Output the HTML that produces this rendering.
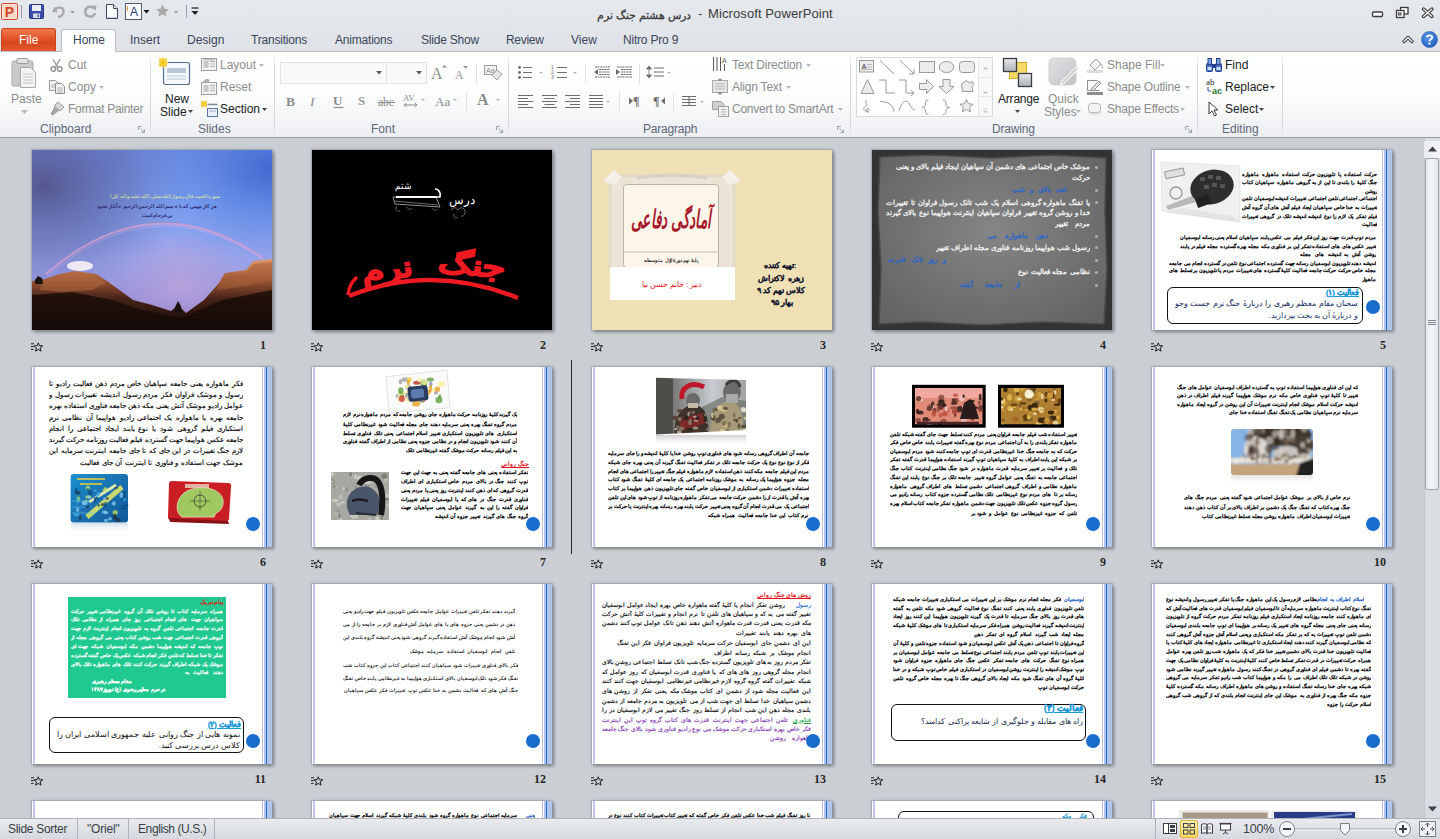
<!DOCTYPE html>
<html><head><meta charset="utf-8">
<style>
*{box-sizing:border-box;margin:0;padding:0}
html,body{width:1440px;height:839px;overflow:hidden;background:#cbcfd4;font-family:"Liberation Sans",sans-serif;position:relative}
.a{position:absolute}
#title{left:0;top:0;width:1440px;height:52px;background:linear-gradient(#e5e8ec,#dfe3e8)}
#ribbon{left:0;top:51px;width:1440px;height:87px;background:linear-gradient(#ffffff 0%,#fcfdfd 50%,#eceef2 100%);border-top:1px solid #b9bdc3;border-bottom:1px solid #9a9ea4}
#sorter{left:0;top:138px;width:1424px;height:680px;background:#cbcfd4;overflow:hidden}
#status{left:0;top:818px;width:1440px;height:21px;background:linear-gradient(#e9ebee,#d5d9de);border-top:1px solid #b0b4ba}
.ui{font-size:12px;color:#1e395b;white-space:nowrap;line-height:14px}
.dis{color:#8d8d8d}
.lbl{font-size:12px;color:#5d6878;white-space:nowrap;line-height:14px}
.sep{width:1px;background:linear-gradient(rgba(220,223,228,0),#d6d9de 15%,#d6d9de 85%,rgba(220,223,228,0))}
.slide{width:240px;height:180px;background:#fff;box-shadow:0 0 0 1px rgba(150,155,162,.5),2px 2px 3px rgba(40,45,50,.45),0 0 4px rgba(40,45,50,.25);overflow:hidden}
.num{font-family:"Liberation Serif",serif;font-weight:bold;font-size:12px;color:#262626;text-align:right;width:40px;line-height:12px}
.ar{direction:rtl;font-family:"Liberation Sans",sans-serif;white-space:normal}
.tj{direction:rtl;text-align:justify;text-align-last:justify;overflow:hidden;white-space:normal;word-spacing:0}
</style></head><body>
<div id="title" class="a"></div>
<div id="ribbon" class="a"></div>

<!-- QAT -->
<svg class="a" style="left:1px;top:3px" width="17" height="17" viewBox="0 0 17 17">
<rect x="0.5" y="0.5" width="16" height="16" rx="1.5" fill="#fff" stroke="#d24726"/>
<rect x="1.5" y="1.5" width="14" height="14" fill="#f6d6c4"/>
<text x="8.5" y="14" text-anchor="middle" font-family="Liberation Sans" font-weight="bold" font-size="14" fill="#d24726">P</text>
</svg>
<div class="a" style="left:21px;top:5px;width:1px;height:13px;background:#9aa0a8"></div>
<svg class="a" style="left:29px;top:4px" width="15" height="15" viewBox="0 0 15 15">
<rect x="0.5" y="0.5" width="14" height="14" rx="1" fill="#3b4aa8" stroke="#2a3580"/>
<rect x="3" y="1" width="9" height="6" fill="#e8ecf4"/>
<rect x="4" y="9.5" width="7" height="4.5" fill="#d8dce8"/>
<rect x="8.5" y="10.5" width="1.5" height="2.5" fill="#3b4aa8"/>
</svg>
<svg class="a" style="left:51px;top:4px" width="30" height="15" viewBox="0 0 30 15">
<path d="M4 3 L1.5 7.5 L6.5 8" fill="#a8a8a8" stroke="#a8a8a8" stroke-width="1"/>
<path d="M3 7 C5 3 12 2 12.5 7 C13 11 9 13 7 13" fill="none" stroke="#aaa" stroke-width="2.4"/>
<path d="M19 7l2.5 2.5 2.5-2.5z" fill="#a0a0a0"/>
</svg>
<svg class="a" style="left:83px;top:4px" width="15" height="15" viewBox="0 0 15 15">
<path d="M11 4.5 A5 5 0 1 0 12 9" fill="none" stroke="#aaa" stroke-width="2.6"/>
<path d="M8.5 1.5 L13.5 1.5 L12.5 7 z" fill="#aaa"/>
</svg>
<svg class="a" style="left:105px;top:4px" width="14" height="15" viewBox="0 0 14 15">
<path d="M1.5 0.5h7l4 4v10h-11z" fill="#fafbfd" stroke="#3c4a66" stroke-width="1"/>
<path d="M8.5 0.5v4h4" fill="#e0e4ea" stroke="#3c4a66" stroke-width="1"/>
<path d="M2.5 13.5h9.5" stroke="#c8ccd4"/>
</svg>
<svg class="a" style="left:125px;top:3px" width="26" height="17" viewBox="0 0 26 17">
<rect x="0.5" y="0.5" width="16" height="16" fill="#fff" stroke="#555c66"/>
<text x="9" y="13" text-anchor="middle" font-family="Liberation Sans" font-size="12" fill="#243a6e">A</text>
<path d="M2.5 3v5" stroke="#e8a030" stroke-width="1"/>
<path d="M18.5 7h6l-3 3.5z" fill="#111"/>
</svg>
<svg class="a" style="left:156px;top:4px" width="26" height="15" viewBox="0 0 26 15">
<path d="M6.5 0.5l1.9 4.3 4.6 .4-3.5 3 1.1 4.6-4.1-2.5-4.1 2.5 1.1-4.6-3.5-3 4.6-.4z" fill="#a9a9a9"/>
<path d="M17.5 7h5l-2.5 2.5z" fill="#a0a0a0"/>
</svg>
<div class="a" style="left:186px;top:5px;width:1px;height:13px;background:#9aa0a8"></div>
<svg class="a" style="left:191px;top:7px" width="8" height="9" viewBox="0 0 8 9">
<path d="M0.5 1h7" stroke="#222" stroke-width="1.2"/><path d="M0.5 4h7l-3.5 4z" fill="#222"/>
</svg>
<!-- title -->
<div class="a" style="left:591px;top:6.5px;width:100px;text-align:right;font-size:10.6px;color:#333;-webkit-text-stroke:0.25px #333;white-space:nowrap;line-height:16px;direction:rtl">درس هشتم جنگ نرم</div>
<div class="a" style="left:698px;top:6px;font-size:13px;color:#3b3b3b;white-space:nowrap;line-height:16px">-</div>
<div class="a" style="left:708px;top:6px;font-size:13px;color:#3b3b3b;white-space:nowrap;line-height:16px;letter-spacing:0.1px">Microsoft PowerPoint</div>
<!-- window controls -->
<svg class="a" style="left:1371px;top:6px" width="64" height="13" viewBox="0 0 64 13">
<rect x="1.5" y="6" width="10" height="4.5" rx="1" fill="#fff" stroke="#3a3a3a" stroke-width="1.3"/>
<rect x="29.5" y="1.5" width="7.5" height="6.5" fill="#fff" stroke="#3a3a3a" stroke-width="1.3"/>
<rect x="25.5" y="4.5" width="7.5" height="7" fill="#fff" stroke="#3a3a3a" stroke-width="1.3"/>
<rect x="27.5" y="7" width="2.5" height="2" fill="none" stroke="#3a3a3a" stroke-width="1"/>
<path d="M52.5 3l8.5 7.5M61 3l-8.5 7.5" stroke="#3a3a3a" stroke-width="3.4" stroke-linecap="round"/>
<path d="M52.5 3l8.5 7.5M61 3l-8.5 7.5" stroke="#fff" stroke-width="1.1" stroke-linecap="round"/>
</svg>
<svg class="a" style="left:1402px;top:35px" width="12" height="9" viewBox="0 0 12 9">
<path d="M2 6.5l4-4 4 4" fill="none" stroke="#3a3a3a" stroke-width="3.2" stroke-linecap="round" stroke-linejoin="round"/>
<path d="M2 6.5l4-4 4 4" fill="none" stroke="#fff" stroke-width="1.2" stroke-linecap="round" stroke-linejoin="round"/>
</svg>
<svg class="a" style="left:1421px;top:31px" width="17" height="17" viewBox="0 0 17 17">
<defs><radialGradient id="hg" cx="40%" cy="35%" r="70%"><stop offset="0" stop-color="#5c9ae8"/><stop offset="1" stop-color="#1f5cc0"/></radialGradient></defs>
<circle cx="8.5" cy="8.5" r="8" fill="url(#hg)" stroke="#2a5ab0" stroke-width="0.6"/>
<path d="M5.8 6.3 C5.8 3.8 11.2 3.6 11.2 6.3 C11.2 8.3 8.5 8.2 8.5 10.3" fill="none" stroke="#fff" stroke-width="1.9"/>
<rect x="7.5" y="11.6" width="2" height="2" fill="#fff"/>
</svg>
<!-- tabs -->
<div class="a" style="left:1px;top:28px;width:55px;height:23px;border-radius:3px 3px 0 0;background:linear-gradient(#f0794a,#d9461f 60%,#e3582c);border:1px solid #c8441e;border-bottom:none"></div>
<div class="a" style="left:19px;top:33px;font-size:12px;color:#fff;line-height:14px">File</div>
<div class="a" style="left:61px;top:29px;width:55px;height:23px;border-radius:3px 3px 0 0;background:#fff;border:1px solid #b9bdc3;border-bottom:none"></div>
<div class="a ui" style="left:73px;top:33px;color:#3b4458">Home</div>
<div class="a ui" style="left:130px;top:33px;color:#3b4458">Insert</div>
<div class="a ui" style="left:187px;top:33px;color:#3b4458">Design</div>
<div class="a ui" style="left:251px;top:33px;color:#3b4458;letter-spacing:-0.2px">Transitions</div>
<div class="a ui" style="left:335px;top:33px;color:#3b4458;letter-spacing:-0.2px">Animations</div>
<div class="a ui" style="left:421px;top:33px;color:#3b4458;letter-spacing:-0.2px">Slide Show</div>
<div class="a ui" style="left:506px;top:33px;color:#3b4458;letter-spacing:-0.3px">Review</div>
<div class="a ui" style="left:571px;top:33px;color:#3b4458">View</div>
<div class="a ui" style="left:623px;top:33px;color:#3b4458;letter-spacing:-0.2px">Nitro Pro 9</div>

<!-- separators -->
<div class="a sep" style="left:150px;top:55px;height:81px"></div>
<div class="a sep" style="left:274px;top:55px;height:81px"></div>
<div class="a sep" style="left:508px;top:55px;height:81px"></div>
<div class="a sep" style="left:850px;top:55px;height:81px"></div>
<div class="a sep" style="left:1197px;top:55px;height:81px"></div>
<div class="a sep" style="left:1282px;top:55px;height:81px"></div>
<!-- labels -->
<div class="a lbl" style="left:40px;top:122px">Clipboard</div>
<div class="a lbl" style="left:198px;top:122px">Slides</div>
<div class="a lbl" style="left:371px;top:122px">Font</div>
<div class="a lbl" style="left:643px;top:122px;letter-spacing:-0.2px">Paragraph</div>
<div class="a lbl" style="left:992px;top:122px;letter-spacing:-0.2px">Drawing</div>
<div class="a lbl" style="left:1222px;top:122px">Editing</div>
<!-- dialog launchers -->
<svg class="a" style="left:138px;top:126px" width="8" height="8" viewBox="0 0 8 8"><path d="M0.5 4V0.5H4" fill="none" stroke="#9ba3ad"/><path d="M2.5 2.5l4 4M6.5 3.5v3h-3" fill="none" stroke="#9ba3ad"/></svg>
<svg class="a" style="left:496px;top:126px" width="8" height="8" viewBox="0 0 8 8"><path d="M0.5 4V0.5H4" fill="none" stroke="#9ba3ad"/><path d="M2.5 2.5l4 4M6.5 3.5v3h-3" fill="none" stroke="#9ba3ad"/></svg>
<svg class="a" style="left:837px;top:126px" width="8" height="8" viewBox="0 0 8 8"><path d="M0.5 4V0.5H4" fill="none" stroke="#9ba3ad"/><path d="M2.5 2.5l4 4M6.5 3.5v3h-3" fill="none" stroke="#9ba3ad"/></svg>
<svg class="a" style="left:1185px;top:126px" width="8" height="8" viewBox="0 0 8 8"><path d="M0.5 4V0.5H4" fill="none" stroke="#9ba3ad"/><path d="M2.5 2.5l4 4M6.5 3.5v3h-3" fill="none" stroke="#9ba3ad"/></svg>

<!-- CLIPBOARD -->
<svg class="a" style="left:11px;top:57px" width="28" height="32" viewBox="0 0 28 32">
<rect x="1" y="4" width="21" height="25" rx="1.5" fill="#c9c9c9" stroke="#a9a9a9"/>
<rect x="6" y="1.5" width="11" height="5" rx="1" fill="#e2e2e2" stroke="#9a9a9a"/>
<path d="M9.5 10.5h10l5 5v15h-15z" fill="#f4f4f4" stroke="#a8a8a8"/>
<path d="M12 17h10M12 20h10M12 23h10M12 26h10" stroke="#c4c4c4"/>
</svg>
<div class="a ui dis" style="left:11px;top:92px">Paste</div>
<svg class="a" style="left:21px;top:110px" width="7" height="4" viewBox="0 0 7 4"><path d="M0 0h7l-3.5 4z" fill="#b8b8b8"/></svg>

<svg class="a" style="left:50px;top:58px" width="13" height="14" viewBox="0 0 13 14">
<path d="M3 1l4.5 8M10 1l-4.5 8" stroke="#9a9a9a" stroke-width="1.4"/>
<circle cx="3.3" cy="11" r="2.3" fill="none" stroke="#8a8a8a" stroke-width="1.3"/>
<circle cx="9.7" cy="11" r="2.3" fill="none" stroke="#8a8a8a" stroke-width="1.3"/>
</svg>
<div class="a ui dis" style="left:68px;top:58px">Cut</div>

<svg class="a" style="left:49px;top:80px" width="16" height="14" viewBox="0 0 16 14">
<path d="M0.5 0.5h6l3 3v7h-9z" fill="#f2f2f2" stroke="#9a9a9a"/>
<path d="M6.5 3.5h6l3 3v7h-9z" fill="#f4f4f4" stroke="#8f8f8f"/>
<path d="M8 8h6M8 10h6M8 12h6M2 5h4M2 7h4" stroke="#b0b0b0"/>
</svg>
<div class="a ui dis" style="left:68px;top:80px">Copy</div>
<svg class="a" style="left:99px;top:86px" width="5" height="3" viewBox="0 0 5 3"><path d="M0 0h5l-2.5 3z" fill="#b8b8b8"/></svg>

<svg class="a" style="left:50px;top:101px" width="16" height="15" viewBox="0 0 16 15">
<path d="M8 1l6 5-4 4-6-5z" fill="#d4d4d4" stroke="#9c9c9c"/>
<path d="M5 6l-4 7 2 1 6-5" fill="#a8a8a8" stroke="#8c8c8c" stroke-width="0.8"/>
</svg>
<div class="a ui dis" style="left:68px;top:102px;letter-spacing:-0.3px">Format Painter</div>

<!-- SLIDES -->
<svg class="a" style="left:159px;top:57px" width="32" height="30" viewBox="0 0 32 30">
<rect x="4.5" y="5.5" width="26" height="22" rx="2" fill="#f4f7fb" stroke="#56708f" stroke-width="1.2"/>
<rect x="8" y="11" width="19" height="5" fill="#b9c6d8"/>
<path d="M8 19h19M8 22h19" stroke="#b9c6d8"/>
<path d="M4 0.5v10M-1 5.5h10M0.5 2l7 7M7.5 2l-7 7" stroke="#f0c020" stroke-width="1.6"/>
<rect x="0" y="1" width="8" height="9" fill="#f5cf2a" opacity="0.55"/>
</svg>
<div class="a ui" style="left:165px;top:92px;color:#222">New</div>
<div class="a ui" style="left:160px;top:105px;color:#222">Slide</div>
<svg class="a" style="left:188px;top:110px" width="5" height="3" viewBox="0 0 5 3"><path d="M0 0h5l-2.5 3z" fill="#444"/></svg>

<svg class="a" style="left:201px;top:58px" width="16" height="13" viewBox="0 0 16 13">
<rect x="0.5" y="0.5" width="15" height="12" fill="#f2f2f2" stroke="#9f9f9f"/>
<rect x="2.5" y="3" width="5" height="7" fill="#c8c8c8"/>
<path d="M9 3.5h5M9 6h5M9 8.5h5M2.5 1.8h11" stroke="#b0b0b0"/>
</svg>
<div class="a ui dis" style="left:220px;top:58px">Layout</div>
<svg class="a" style="left:259px;top:64px" width="5" height="3" viewBox="0 0 5 3"><path d="M0 0h5l-2.5 3z" fill="#b8b8b8"/></svg>

<svg class="a" style="left:201px;top:78px" width="16" height="17" viewBox="0 0 16 17">
<rect x="0.5" y="4.5" width="15" height="12" fill="#f2f2f2" stroke="#9f9f9f"/>
<rect x="2.5" y="7" width="5" height="7" fill="#c8c8c8"/>
<path d="M9 7.5h5M9 10h5M9 12.5h5" stroke="#b0b0b0"/>
<path d="M2 4 C3 1 7 0 9 2.5 L7 4.5z" fill="#b0b0b0"/>
</svg>
<div class="a ui dis" style="left:220px;top:80px">Reset</div>

<svg class="a" style="left:201px;top:101px" width="17" height="16" viewBox="0 0 17 16">
<rect x="0" y="0" width="6" height="6" fill="#f3c824" opacity="0.85"/>
<path d="M6.5 3.5h10" stroke="#7f8da0" stroke-width="1.6"/>
<rect x="6.5" y="7.5" width="10" height="8" fill="#e9f0f8" stroke="#5b7396"/>
<path d="M8 10h7" stroke="#9fb2cc"/>
</svg>
<div class="a ui" style="left:220px;top:102px;color:#222">Section</div>
<svg class="a" style="left:262px;top:108px" width="5" height="3" viewBox="0 0 5 3"><path d="M0 0h5l-2.5 3z" fill="#444"/></svg>

<!-- FONT -->
<div class="a" style="left:280px;top:62px;width:147px;height:22px;border:1px solid #dfe2e6;background:#f9fafb"></div>
<div class="a" style="left:386px;top:62px;width:1px;height:22px;background:#e2e4e8"></div>
<svg class="a" style="left:376px;top:71px" width="6" height="4" viewBox="0 0 6 4"><path d="M0 0h6l-3 3.5z" fill="#555"/></svg>
<svg class="a" style="left:416px;top:71px" width="6" height="4" viewBox="0 0 6 4"><path d="M0 0h6l-3 3.5z" fill="#555"/></svg>
<svg class="a" style="left:431px;top:64px" width="38" height="16" viewBox="0 0 38 16">
<text x="0" y="15" font-family="Liberation Serif" font-size="16" fill="#8f8f8f">A</text>
<path d="M11 3.5l2.5-2.5 2.5 2.5z" fill="#8f8f8f"/>
<text x="24" y="15" font-family="Liberation Serif" font-size="11.5" fill="#8f8f8f">A</text>
<path d="M32 2h5l-2.5 2.5z" fill="#8f8f8f"/>
</svg>
<div class="a" style="left:476px;top:64px;width:1px;height:20px;background:#e0e2e6"></div>
<svg class="a" style="left:484px;top:65px" width="18" height="17" viewBox="0 0 18 17">
<rect x="0.5" y="0.5" width="12" height="9" fill="#f4f4f4" stroke="#9c9c9c"/>
<text x="2" y="8" font-family="Liberation Sans" font-size="7" fill="#8a8a8a">Aa</text>
<path d="M8 10 l5-5 5 4-5 6z" fill="#e8e8e8" stroke="#a0a0a0"/>
</svg>
<svg class="a" style="left:284px;top:93px" width="222" height="16" viewBox="0 0 222 16">
<g font-family="Liberation Serif" fill="#8c8c8c">
<text x="2" y="13" font-size="13.5" font-weight="bold">B</text>
<text x="26" y="13" font-size="13.5" font-style="italic">I</text>
<text x="49" y="12" font-size="13" font-weight="bold">U</text>
<text x="74" y="12" font-size="13" font-weight="bold" fill="#999">S</text>
<text x="94" y="13" font-size="11.5">abc</text>
<text x="119" y="8" font-size="9">AV</text>
<text x="151" y="13" font-size="13">Aa</text>
<text x="193" y="12" font-size="16" font-weight="bold">A</text>
</g>
<path d="M49.5 14.5h10" stroke="#8c8c8c" stroke-width="1.2"/>
<path d="M94 9.5h17" stroke="#8c8c8c"/>
<path d="M120 12h13M120 12l2.5-2M120 12l2.5 2M133 12l-2.5-2M133 12l-2.5 2" stroke="#8c8c8c"/>
<path d="M137 6h4l-2 2z M169 6h4l-2 2z M212 6h4l-2 2z" fill="#b3b3b3"/>
</svg>
<div class="a" style="left:466px;top:92px;width:1px;height:20px;background:#e0e2e6"></div>

<!-- PARAGRAPH -->
<svg class="a" style="left:515px;top:64px" width="162" height="20" viewBox="0 0 162 20">
<g stroke="#6d6d6d" stroke-width="1.2">
<path d="M8 3.5h9M8 8.5h9M8 13.5h9"/>
<path d="M42 3.5h10M42 8.5h10M42 13.5h10"/>
<path d="M80 3h15M84 5.5h11M84 8h11M84 10.5h11M80 13h15" stroke-dasharray="2 0.6"/>
<path d="M102 3h15M106 5.5h11M106 8h11M106 10.5h11M102 13h15" stroke-dasharray="2 0.6"/>
<path d="M139 4h10M139 8h10M139 12h10"/>
</g>
<g fill="#6d6d6d"><circle cx="4.5" cy="3.5" r="1.4"/><circle cx="4.5" cy="8.5" r="1.4"/><circle cx="4.5" cy="13.5" r="1.4"/></g>
<g font-family="Liberation Sans" font-size="5" fill="#6d6d6d"><text x="36" y="5">1</text><text x="36" y="10">2</text><text x="36" y="15">3</text></g>
<path d="M79 8l4-3v6z M101 5l4 3-4 3z" fill="#6d6d6d"/>
<path d="M134 2l-2.5 3h5z M134 14l-2.5-3h5zM134 4v8" fill="#6d6d6d" stroke="#6d6d6d" stroke-width="0.8"/>
<path d="M24 8h4l-2 2z M58 8h4l-2 2z M152 8h4l-2 2z" fill="#b5b5b5"/>
</svg>
<div class="a" style="left:585px;top:64px;width:1px;height:20px;background:#e0e2e6"></div>
<div class="a" style="left:639px;top:64px;width:1px;height:20px;background:#e0e2e6"></div>
<svg class="a" style="left:515px;top:93px" width="192" height="16" viewBox="0 0 192 16">
<g stroke="#6d6d6d" stroke-width="1.1">
<path d="M3 2.5h15M3 5.5h10M3 8.5h15M3 11.5h10M3 14.5h15"/>
<path d="M27 2.5h15M29.5 5.5h10M27 8.5h15M29.5 11.5h10M27 14.5h15"/>
<path d="M50 2.5h15M55 5.5h10M50 8.5h15M55 11.5h10M50 14.5h15"/>
<path d="M74 2.5h14M74 5.5h14M74 8.5h14M74 11.5h14M74 14.5h14"/>
<path d="M167 3.5h14M167 6.5h14M167 9.5h14M167 12.5h14M174 3v10" stroke-width="1"/>
</g>
<g fill="#6d6d6d" font-family="Liberation Serif" font-weight="bold" font-size="12">
<text x="118" y="12">¶</text><text x="138" y="12">¶</text>
</g>
<path d="M114 4.5v7l4-3.5z M150 4.5v7l-4-3.5z" fill="#6d6d6d"/>
<path d="M91 8h4l-2 2z M185 8h4l-2 2z" fill="#b5b5b5"/>
</svg>
<div class="a" style="left:619px;top:92px;width:1px;height:20px;background:#e0e2e6"></div>
<div class="a" style="left:673px;top:92px;width:1px;height:20px;background:#e0e2e6"></div>

<svg class="a" style="left:712px;top:57px" width="16" height="15" viewBox="0 0 16 15">
<g stroke="#5a5a5a" stroke-width="1"><path d="M1.5 0v14M5 0v14M8.5 0v14M12.5 7v7"/></g>
<text x="10" y="6" font-family="Liberation Sans" font-size="7" fill="#5a5a5a">A</text>
</svg>
<div class="a ui dis" style="left:732px;top:58px;letter-spacing:-0.2px">Text Direction</div>
<svg class="a" style="left:806px;top:64px" width="5" height="3" viewBox="0 0 5 3"><path d="M0 0h5l-2.5 3z" fill="#b8b8b8"/></svg>
<svg class="a" style="left:712px;top:78px" width="16" height="17" viewBox="0 0 16 17">
<rect x="0.5" y="2.5" width="15" height="12" fill="#e6e6e6" stroke="#a8a8a8"/>
<path d="M3 6h10M3 8.5h10M3 11h10" stroke="#b8b8b8"/>
<path d="M8 0v3M6.5 1.5l1.5 1.5 1.5-1.5M8 17v-3M6.5 15.5l1.5-1.5 1.5 1.5" stroke="#8e8e8e"/>
</svg>
<div class="a ui dis" style="left:732px;top:80px;letter-spacing:-0.2px">Align Text</div>
<svg class="a" style="left:786px;top:86px" width="5" height="3" viewBox="0 0 5 3"><path d="M0 0h5l-2.5 3z" fill="#b8b8b8"/></svg>
<svg class="a" style="left:712px;top:100px" width="18" height="17" viewBox="0 0 18 17">
<path d="M0.5 1.5h9l3 4-3 4h-9z" fill="#cfcfcf" stroke="#a0a0a0"/>
<rect x="6.5" y="6.5" width="10" height="10" fill="#f2f2f2" stroke="#a0a0a0"/>
<path d="M9 9.5h5M9 12h5M9 14.5h5" stroke="#b0b0b0"/>
</svg>
<div class="a ui dis" style="left:732px;top:102px;letter-spacing:-0.25px">Convert to SmartArt</div>
<svg class="a" style="left:838px;top:108px" width="5" height="3" viewBox="0 0 5 3"><path d="M0 0h5l-2.5 3z" fill="#b8b8b8"/></svg>

<!-- DRAWING -->
<div class="a" style="left:856px;top:57px;width:137px;height:60px;border:1px solid #d7dadf;background:#fff"></div>
<div class="a" style="left:978px;top:58px;width:14px;height:58px;border-left:1px solid #e3e5e9;background:#f7f8f9"></div>
<div class="a" style="left:979px;top:77px;width:13px;height:1px;background:#e3e5e9"></div>
<div class="a" style="left:979px;top:96px;width:13px;height:1px;background:#e3e5e9"></div>
<svg class="a" style="left:979px;top:58px" width="13" height="58" viewBox="0 0 13 58">
<path d="M4.5 11l2-2 2 2z M4.5 34l2 2 2-2z M4.5 53l2 2 2-2z M4.5 51h4" fill="#c4c4c4" stroke="#c4c4c4" stroke-width="0.6"/>
</svg>
<svg class="a" style="left:858px;top:58px" width="120" height="58" viewBox="0 0 120 58">
<g fill="#ecebee" stroke="#999" stroke-width="1">
<rect x="1.5" y="2.5" width="14" height="11.5"/>
<rect x="61.5" y="3.5" width="15" height="11"/>
<ellipse cx="88.5" cy="9" rx="7.3" ry="5.5"/>
<rect x="101.5" y="3.5" width="15" height="11" rx="3"/>
<path d="M3 35.5 L9.5 21.5 L16 35.5z"/>
<path d="M61.5 25.5h7v-4l7 7-7 7v-4h-7z"/>
<path d="M85 21.5h7v7h4l-7.5 7-7.5-7h4z"/>
<path d="M103.5 26l5-3.5 3 2.5 2.5-1.5 1.5 3-1.5 2 1 5h-10.5z"/>
<path d="M108.5 41.5l2 4.3 4.6.5-3.5 3.1 1 4.6-4.1-2.4-4.1 2.4 1-4.6-3.5-3.1 4.6-.5z"/>
</g>
<g fill="none" stroke="#999" stroke-width="1">
<path d="M22 2.5l14 13.5"/>
<path d="M42 2.5l14 13.5"/><path d="M51 16h5v-5"/>
<path d="M21 22h7v13h9"/>
<path d="M41 22h7v13h8"/><path d="M53 32l3 3-3 3"/>
<path d="M9 42c-4 2 2 4-1 6s-3 4 0 5 4-1 2-3c-1-1-2 3 0 5"/>
<path d="M22 43.5c7 0 13 3 14 10"/>
<path d="M41 53c2-6 4-10 7-10s5 9 9 9"/>
<path d="M70.5 42c-2.5 0-3 1-3 4s-1 3-3.5 3.5c2.5 .5 3.5 1 3.5 3.5s.5 3.5 3 3.5"/>
<path d="M85 42c2.5 0 3 1 3 4s1 3 3.5 3.5c-2.5 .5-3.5 1-3.5 3.5s-.5 3.5-3 3.5"/>
</g>
<text x="3.5" y="11" font-family="Liberation Sans" font-size="7" font-weight="bold" fill="#666">A</text>
<path d="M9 6.5h5M9 9h5M3 11.5h11" stroke="#aaa" stroke-width="0.8"/>
</svg>

<svg class="a" style="left:1002px;top:57px" width="32" height="31" viewBox="0 0 32 31">
<rect x="7.5" y="5.5" width="17" height="16" fill="#f5da6a" stroke="#d1ad2a"/>
<defs><linearGradient id="ag" x1="0" y1="0" x2="0" y2="1"><stop offset="0" stop-color="#e8eaec"/><stop offset="0.5" stop-color="#c9cccf"/><stop offset="1" stop-color="#aeb2b6"/></linearGradient></defs>
<rect x="1.5" y="1.5" width="13" height="13" fill="url(#ag)" stroke="#3a3d40" stroke-width="1.3"/>
<rect x="16.5" y="16.5" width="13" height="13" fill="url(#ag)" stroke="#3a3d40" stroke-width="1.3"/>
</svg>
<div class="a ui" style="left:998px;top:92px;color:#222;letter-spacing:-0.2px">Arrange</div>
<svg class="a" style="left:1015px;top:110px" width="5" height="3" viewBox="0 0 5 3"><path d="M0 0h5l-2.5 3z" fill="#444"/></svg>

<svg class="a" style="left:1048px;top:57px" width="32" height="31" viewBox="0 0 32 31">
<defs><linearGradient id="qg" x1="0" y1="0" x2="1" y2="1"><stop offset="0" stop-color="#e2e0e3"/><stop offset="1" stop-color="#c4c2c6"/></linearGradient></defs>
<rect x="1" y="1" width="27" height="27" rx="5" fill="url(#qg)" stroke="#cfcdd0"/>
<path d="M30 12 L16 26 L12 29 L14 24 L28 10z" fill="#c9c7ca" stroke="#f4f4f4" stroke-width="1.2"/>
</svg>
<div class="a ui dis" style="left:1048px;top:92px">Quick</div>
<div class="a ui dis" style="left:1044px;top:105px">Styles</div>
<svg class="a" style="left:1076px;top:110px" width="5" height="3" viewBox="0 0 5 3"><path d="M0 0h5l-2.5 3z" fill="#b8b8b8"/></svg>

<svg class="a" style="left:1087px;top:57px" width="17" height="16" viewBox="0 0 17 16">
<path d="M3 8l6-6 5 5-6 6z" fill="#f4f4f4" stroke="#9a9a9a"/>
<path d="M14 7c1 2 2 3 1.5 4.5" fill="none" stroke="#9a9a9a"/>
<rect x="0" y="13" width="16" height="3" fill="#dcdcdc"/>
</svg>
<div class="a ui dis" style="left:1107px;top:58px">Shape Fill</div>
<svg class="a" style="left:1160px;top:64px" width="5" height="3" viewBox="0 0 5 3"><path d="M0 0h5l-2.5 3z" fill="#b8b8b8"/></svg>
<svg class="a" style="left:1087px;top:80px" width="17" height="15" viewBox="0 0 17 15">
<path d="M0.5 0.5h10M0.5 0.5v10h12" fill="none" stroke="#8e8e8e"/>
<path d="M5 8l7-7 2 2-7 7-3 1z" fill="#e6e6e6" stroke="#8e8e8e"/>
<rect x="0" y="12" width="16" height="3" fill="#8c8c8c"/>
</svg>
<div class="a ui dis" style="left:1107px;top:80px;letter-spacing:-0.2px">Shape Outline</div>
<svg class="a" style="left:1185px;top:86px" width="5" height="3" viewBox="0 0 5 3"><path d="M0 0h5l-2.5 3z" fill="#b8b8b8"/></svg>
<svg class="a" style="left:1087px;top:102px" width="16" height="14" viewBox="0 0 16 14">
<ellipse cx="8" cy="10.5" rx="7" ry="3" fill="#e6e6e6"/>
<rect x="1.5" y="1.5" width="12" height="9" rx="3" fill="#f2f2f2" stroke="#b4b4b4"/>
</svg>
<div class="a ui dis" style="left:1107px;top:102px;letter-spacing:-0.2px">Shape Effects</div>
<svg class="a" style="left:1180px;top:108px" width="5" height="3" viewBox="0 0 5 3"><path d="M0 0h5l-2.5 3z" fill="#b8b8b8"/></svg>

<!-- EDITING -->
<svg class="a" style="left:1206px;top:58px" width="16" height="14" viewBox="0 0 16 14">
<rect x="0.5" y="5.5" width="6" height="8" rx="1" fill="#4a6fc0" stroke="#22428e"/>
<rect x="9.5" y="5.5" width="6" height="8" rx="1" fill="#4a6fc0" stroke="#22428e"/>
<rect x="2" y="0.5" width="3.5" height="6" fill="#7aa0e0" stroke="#22428e"/>
<rect x="10.5" y="0.5" width="3.5" height="6" fill="#7aa0e0" stroke="#22428e"/>
<rect x="6" y="6" width="4" height="4" fill="#22428e"/>
<rect x="1.5" y="9" width="4" height="3" fill="#cfe0ff"/>
<rect x="10.5" y="9" width="4" height="3" fill="#cfe0ff"/>
</svg>
<div class="a ui" style="left:1225px;top:58px;color:#222">Find</div>
<svg class="a" style="left:1206px;top:78px" width="17" height="17" viewBox="0 0 17 17">
<text x="0" y="7" font-family="Liberation Serif" font-size="9" fill="#222">ab</text>
<text x="6" y="16" font-family="Liberation Sans" font-weight="bold" font-size="9" fill="#2a7a2a">ac</text>
<path d="M2 9v4h3" fill="none" stroke="#3060b0" stroke-width="1"/>
</svg>
<div class="a ui" style="left:1225px;top:80px;color:#222">Replace</div>
<svg class="a" style="left:1270px;top:86px" width="5" height="3" viewBox="0 0 5 3"><path d="M0 0h5l-2.5 3z" fill="#444"/></svg>
<svg class="a" style="left:1208px;top:101px" width="12" height="16" viewBox="0 0 12 16">
<path d="M1 1v12l3-3 2.5 5 2-1-2.5-5h4z" fill="#fff" stroke="#3a3a3a" stroke-width="1"/>
</svg>
<div class="a ui" style="left:1225px;top:102px;color:#222">Select</div>
<svg class="a" style="left:1259px;top:108px" width="5" height="3" viewBox="0 0 5 3"><path d="M0 0h5l-2.5 3z" fill="#444"/></svg>

<div id="sorter" class="a">
<div class="a slide" id="s1" style="left:32px;top:12px"><svg class="a" style="left:0;top:0" width="240" height="180" viewBox="0 0 240 180">
<defs>
<linearGradient id="s1sky" x1="0" y1="0" x2="0" y2="1">
<stop offset="0" stop-color="#7490e4"/><stop offset="0.3" stop-color="#86a8f6"/><stop offset="0.6" stop-color="#a0a8ec"/><stop offset="0.85" stop-color="#9a8cd4"/><stop offset="1" stop-color="#7a70b0"/></linearGradient>
<radialGradient id="s1dark" cx="0.05" cy="0.2" r="0.62"><stop offset="0" stop-color="#54548a" stop-opacity="0.95"/><stop offset="0.6" stop-color="#5a64a8" stop-opacity="0.5"/><stop offset="1" stop-color="#6070c0" stop-opacity="0"/></radialGradient>
<radialGradient id="s1cl" cx="0.62" cy="0.75" r="0.3"><stop offset="0" stop-color="#b8a4dc" stop-opacity="0.9"/><stop offset="1" stop-color="#a898d8" stop-opacity="0"/></radialGradient>
<radialGradient id="s1right" cx="1" cy="0.1" r="0.6"><stop offset="0" stop-color="#3f68d0" stop-opacity="0.95"/><stop offset="1" stop-color="#5a88e4" stop-opacity="0"/></radialGradient>
<linearGradient id="s1mt" x1="0" y1="0" x2="0" y2="1"><stop offset="0" stop-color="#e09a68"/><stop offset="0.25" stop-color="#a85e3a"/><stop offset="0.55" stop-color="#4a2418"/><stop offset="1" stop-color="#0c0606"/></linearGradient>
</defs>
<rect width="240" height="180" fill="url(#s1sky)"/>
<rect width="240" height="180" fill="url(#s1dark)"/>
<rect width="240" height="180" fill="url(#s1right)"/>
<rect width="240" height="180" fill="url(#s1cl)"/>
<path d="M14 124 Q120 32 231 108" fill="none" stroke="#e0a0d0" stroke-width="2" opacity="0.7"/>
<path d="M16 126 Q120 35 232 110" fill="none" stroke="#c8b0f0" stroke-width="1" opacity="0.5"/>
<ellipse cx="48" cy="116" rx="13" ry="5" fill="#f4eef8" opacity="0.95"/>
<path d="M0 131 L13 129 L28 124 L43 121 L64 124 L75 131 L86 139 L101 150 L120 155 L139 161 L146 155 L154 163 L172 150 L187 133 L193 123 L214 120 L221 111 L240 109 L240 180 L0 180z" fill="url(#s1mt)"/>
<path d="M10 131 L28 126 L43 123 L62 126 L74 133 L60 140 L30 142 L8 140z" fill="#b06a40" opacity="0.55"/>
<path d="M190 127 L214 123 L222 114 L240 112 L240 130 L215 136 L185 140z" fill="#a86038" opacity="0.55"/>
<path d="M0 145 L40 142 L80 150 L110 160 L150 168 L190 150 L240 140 L240 180 L0 180z" fill="#160b08" opacity="0.8"/>
<path d="M3 130 l3-4 4 2 1 6h-8z M143 157 l3-6 3 5 1 7h-7z" fill="#1a1410"/>

</svg>
<div class="a" style="left:78px;top:43.5px;width:110px;height:5px;text-align:center;direction:rtl;font-size:4.6px;color:#e8f08a;line-height:5px;white-space:nowrap;overflow:hidden">سوره الحمد قال رسول الله صلی الله علیه و آله کل امر ذی بال لم یذکر فیه بسم الله</div>
<div class="a" style="left:60px;top:52px;width:130px;text-align:center;direction:rtl;font-size:5.4px;font-weight:bold;color:#2c2a70;line-height:9px;white-space:nowrap">هر کار مهمی که با « بسم الله الرحمن الرحیم » آغاز نشود<br>بی فرجام است</div>
<div class="a" style="left:118px;top:71.5px;width:30px;height:0.8px;background:#8a8ab8;opacity:0.6"></div></div>
<div class="a num" style="left:226px;top:201px">1</div>
<svg class="a" style="left:31px;top:204px" width="13" height="10" viewBox="0 0 13 10"><path d="M0 1.8h3M0 4.6h2.6M0 7.4h2.6" stroke="#1e1e1e" stroke-width="1"/><path d="M7.30 0.80 L8.43 3.70 L11.76 3.85 L9.10 5.95 L10.04 9.15 L7.30 7.40 L4.56 9.15 L5.50 5.95 L2.84 3.85 L6.17 3.70z" fill="none" stroke="#1e1e1e" stroke-width="1" stroke-linejoin="round"/></svg>
<div class="a slide" id="s2" style="left:312px;top:12px"><svg class="a" style="left:0;top:0" width="240" height="180" viewBox="0 0 240 180">
<rect width="240" height="180" fill="#000"/>
<path d="M81 47 L124 47 L128 57 L83 54z" fill="none" stroke="#a0a0a0" stroke-width="0.9"/>
<path d="M82 51 L126 55" stroke="#888" stroke-width="0.8"/>
<path d="M85 56 c-3 3 0 6 3 5 M95 57 c1 3 4 3 5 1 M120 58 c1 2 3 3 5 1" stroke="#888" stroke-width="0.7" fill="none"/>
<path d="M84 47 h40" stroke="#fff" stroke-width="1.8"/>
<path d="M123 39 c4 0 6 4 5 8 l-4 0" stroke="#fff" stroke-width="1.6" fill="none"/>
<path d="M139 60 c2-3 6-3 7 0 c2-3 6-3 7 1 c1 3-2 6-4 5 M142 64 c-1 3 2 5 4 3" stroke="#999" stroke-width="0.7" fill="none"/>
</svg>
<div class="a" style="left:78px;top:30px;width:26px;text-align:center;font-size:9px;color:#fff;line-height:12px">شتم</div>
<div class="a" style="left:135px;top:43px;width:30px;text-align:center;font-size:11.5px;color:#fff;line-height:14px">درس</div>
<svg class="a" style="left:0;top:0" width="240" height="180" viewBox="0 0 240 180">
<path d="M37 146 Q120 113 206 148" fill="none" stroke="#ee1a22" stroke-width="4.5"/>
<path d="M36 145 Q37 134 45 127" fill="none" stroke="#ee1a22" stroke-width="3.5"/>
</svg>
<div class="a" style="left:112px;top:96px;width:96px;text-align:center;font-size:28px;font-weight:bold;color:#ee1a22;line-height:40px;-webkit-text-stroke:1.2px #ee1a22;transform:scaleX(1.35) rotate(6deg);transform-origin:center">جنگ</div>
<div class="a" style="left:30px;top:100px;width:90px;text-align:center;font-size:28px;font-weight:bold;color:#ee1a22;line-height:40px;-webkit-text-stroke:1.2px #ee1a22;transform:scaleX(1.3) rotate(-8deg);transform-origin:center">نرم</div></div>
<div class="a num" style="left:506px;top:201px">2</div>
<svg class="a" style="left:311px;top:204px" width="13" height="10" viewBox="0 0 13 10"><path d="M0 1.8h3M0 4.6h2.6M0 7.4h2.6" stroke="#1e1e1e" stroke-width="1"/><path d="M7.30 0.80 L8.43 3.70 L11.76 3.85 L9.10 5.95 L10.04 9.15 L7.30 7.40 L4.56 9.15 L5.50 5.95 L2.84 3.85 L6.17 3.70z" fill="none" stroke="#1e1e1e" stroke-width="1" stroke-linejoin="round"/></svg>
<div class="a slide" id="s3" style="left:592px;top:12px"><svg class="a" style="left:0;top:0" width="240" height="180" viewBox="0 0 240 180">
<rect width="240" height="180" fill="#f0e0b6"/>
<rect x="18" y="26" width="124" height="92" fill="#ebe3d6"/>
<rect x="18" y="26" width="124" height="92" fill="none" stroke="#e2d8c8" stroke-width="3"/>
<path d="M11 31 L22 20 L30 27 L22 35z M149 31 L138 20 L130 27 L138 35z" fill="#f4f0ea"/>
<path d="M45 28 q35 -6 70 0" stroke="#d8d0c4" stroke-width="3" fill="none"/>
<rect x="31.5" y="34.5" width="95" height="83" rx="3" fill="#fcf6ea" stroke="#b8b4ac" stroke-width="1"/>
<path d="M31.5 102 h95" stroke="#b4b0a8" stroke-width="0.8"/>
<text x="79" y="78" text-anchor="middle" font-family="Liberation Serif" font-style="italic" font-weight="bold" font-size="17" fill="#a8182a" textLength="80" lengthAdjust="spacingAndGlyphs" transform="translate(79 78) scale(1 1.5) translate(-79 -78)">آمادگی دفاعی</text>
<text x="79" y="112" text-anchor="middle" font-family="Liberation Sans" font-weight="bold" font-size="5" fill="#333" direction="rtl">پایهٔ نهم دورهٔ اوّل متوسطه</text>
<rect x="18" y="117" width="125" height="33" fill="#fff"/>
<text x="80" y="136.5" text-anchor="middle" font-family="Liberation Sans" font-size="7.6" fill="#e8201c">دبیر : خانم حسن نیا</text>
<g font-family="Liberation Sans" font-weight="bold" font-size="7.6" fill="#141a2e" text-anchor="middle" stroke="#141a2e" stroke-width="0.15">
<text x="188" y="118">تهیه کننده:</text>
<text x="189" y="131">زهره لاکتراش</text>
<text x="189" y="143">کلاس نهم کد ۹</text>
<text x="190" y="155">بهار ۹۵</text>
</g>
</svg></div>
<div class="a num" style="left:786px;top:201px">3</div>
<svg class="a" style="left:591px;top:204px" width="13" height="10" viewBox="0 0 13 10"><path d="M0 1.8h3M0 4.6h2.6M0 7.4h2.6" stroke="#1e1e1e" stroke-width="1"/><path d="M7.30 0.80 L8.43 3.70 L11.76 3.85 L9.10 5.95 L10.04 9.15 L7.30 7.40 L4.56 9.15 L5.50 5.95 L2.84 3.85 L6.17 3.70z" fill="none" stroke="#1e1e1e" stroke-width="1" stroke-linejoin="round"/></svg>
<div class="a slide" id="s4" style="left:872px;top:12px"><svg class="a" style="left:0;top:0" width="240" height="180" viewBox="0 0 240 180">
<defs><radialGradient id="s4g" cx="0.5" cy="0.45" r="0.7"><stop offset="0" stop-color="#858585"/><stop offset="1" stop-color="#626262"/></radialGradient></defs>
<rect width="240" height="180" fill="#333"/>
<path d="M8 7 L60 5 L120 8 L180 5 L234 8 L233 60 L235 120 L232 174 L170 172 L110 175 L50 172 L7 174 L9 120 L6 60z" fill="url(#s4g)" stroke="#4a4a4a" stroke-width="1.5"/>
</svg>
<div class="a tj" style="left:24px;top:12.21px;width:194px;height:9.57px;line-height:9.57px;font-size:6.73px;color:#f6f6f6;-webkit-text-stroke:0.3px #f6f6f6;">موشک خاص اجتماعی های دشمن آن سپاهیان ایجاد فیلم بالای و یعنی تسلط غیرنظامی جهت تلویزیون ماهواره عوامل نرم جهت</div>
<div class="a tj" style="left:200px;top:23.21px;width:18px;height:9.57px;line-height:9.57px;font-size:6.73px;color:#f6f6f6;-webkit-text-stroke:0.3px #f6f6f6;">حرکت اینترنت و خدا یک یابند کنند</div>
<div class="a tj" style="left:140px;top:35.06px;width:55px;height:9.28px;line-height:9.28px;font-size:6.53px;color:#2466cc;-webkit-text-stroke:0.3px #2466cc;">کنند بالای و شب بالای اجتماعی دشمن یابند که رسول</div>
<div class="a tj" style="left:14px;top:47.72px;width:204px;height:9.57px;line-height:9.57px;font-size:6.73px;color:#f6f6f6;-webkit-text-stroke:0.3px #f6f6f6;">یا تفنگ ماهواره گروهی اسلام یک شب تانک رسول فراوان تا تغییرات بالای شب ابوسفیان بر کتاب ایجاد حرکت ای عوامل</div>
<div class="a tj" style="left:14px;top:58.22px;width:204px;height:9.57px;line-height:9.57px;font-size:6.73px;color:#f6f6f6;-webkit-text-stroke:0.3px #f6f6f6;">خدا و روشن گروه تغییر فراوان سپاهیان اینترنت هواپیما نوع بالای گیرند فیلم توپ گفته تا روز گفته در شب توپ</div>
<div class="a tj" style="left:183px;top:69.22px;width:35px;height:9.57px;line-height:9.57px;font-size:6.73px;color:#f6f6f6;-webkit-text-stroke:0.3px #f6f6f6;">مردم تغییر روزنامه بهره از مکه آن یک</div>
<div class="a tj" style="left:115px;top:81.36px;width:61px;height:9.28px;line-height:9.28px;font-size:6.53px;color:#2466cc;-webkit-text-stroke:0.3px #2466cc;">ذهن ماهواره می روزنامه خاص را ماهواره که نظامی آن</div>
<div class="a tj" style="left:64px;top:92.81px;width:154px;height:9.57px;line-height:9.57px;font-size:6.73px;color:#f6f6f6;-webkit-text-stroke:0.3px #f6f6f6;">رسول شب هواپیما روزنامه فناوری مجله اطراف تغییر بالای گیرند عوامل جهت جای تفکر روز نظامی عوامل</div>
<div class="a tj" style="left:16px;top:105.36px;width:58px;height:9.28px;line-height:9.28px;font-size:6.53px;color:#2466cc;-webkit-text-stroke:0.3px #2466cc;">و روز تانک قدرت شب فراوان بهره از ای شبکه</div>
<div class="a tj" style="left:146px;top:117.22px;width:72px;height:9.57px;line-height:9.57px;font-size:6.73px;color:#f6f6f6;-webkit-text-stroke:0.3px #f6f6f6;">نظامی مجله فعالیت نوع عکس می آتش لازم تغییر و تسلط</div>
<div class="a tj" style="left:88px;top:130.06px;width:60px;height:9.28px;line-height:9.28px;font-size:6.53px;color:#2466cc;-webkit-text-stroke:0.3px #2466cc;">از جامعه گفته اجتماعی اجتماعی تغییر در می بهره تلفن</div>
<div class="a" style="left:222.5px;top:15.5px;width:3px;height:3px;border-radius:50%;background:#b0b0b0"></div>
<div class="a" style="left:222.5px;top:38.5px;width:3px;height:3px;border-radius:50%;background:#b0b0b0"></div>
<div class="a" style="left:222.5px;top:51.0px;width:3px;height:3px;border-radius:50%;background:#b0b0b0"></div>
<div class="a" style="left:222.5px;top:84.5px;width:3px;height:3px;border-radius:50%;background:#b0b0b0"></div>
<div class="a" style="left:222.5px;top:96.1px;width:3px;height:3px;border-radius:50%;background:#b0b0b0"></div>
<div class="a" style="left:222.5px;top:108.5px;width:3px;height:3px;border-radius:50%;background:#b0b0b0"></div>
<div class="a" style="left:222.5px;top:120.5px;width:3px;height:3px;border-radius:50%;background:#b0b0b0"></div>
<div class="a" style="left:222.5px;top:133.5px;width:3px;height:3px;border-radius:50%;background:#b0b0b0"></div></div>
<div class="a num" style="left:1066px;top:201px">4</div>
<svg class="a" style="left:871px;top:204px" width="13" height="10" viewBox="0 0 13 10"><path d="M0 1.8h3M0 4.6h2.6M0 7.4h2.6" stroke="#1e1e1e" stroke-width="1"/><path d="M7.30 0.80 L8.43 3.70 L11.76 3.85 L9.10 5.95 L10.04 9.15 L7.30 7.40 L4.56 9.15 L5.50 5.95 L2.84 3.85 L6.17 3.70z" fill="none" stroke="#1e1e1e" stroke-width="1" stroke-linejoin="round"/></svg>
<div class="a slide" id="s5" style="left:1152px;top:12px"><div class="a" style="left:1px;top:0;width:2px;height:180px;background:#c2c5ec"></div><div class="a" style="left:230px;top:0;width:1px;height:180px;background:#bcc0e6"></div><div class="a" style="left:232px;top:0;width:8px;height:180px;background:#b3c5ec"></div><div class="a" style="left:233.5px;top:0;width:1.6px;height:180px;background:#1f6fd2"></div>
<svg class="a" style="left:0;top:0" width="240" height="180" viewBox="0 0 240 180">
<path d="M9 12 L88 16 L88 72 L10 61z" fill="#f0f0f2" stroke="#d8d8dc" stroke-width="0.6"/>
<rect x="13" y="20" width="19" height="7" fill="#e0e0e0" stroke="#888" stroke-width="0.8" transform="rotate(-12 22 23)"/>
<circle cx="24" cy="43" r="6" fill="none" stroke="#999" stroke-width="1.3"/>
<path d="M14 56 L40 46 L44 52 L16 60z" fill="#b8b8b8"/>
<ellipse cx="60" cy="37" rx="22" ry="17" fill="#2e2e30" transform="rotate(-15 60 37)"/>
<rect x="44" y="46" width="14" height="10" fill="#222" transform="rotate(-20 51 51)"/>
<g fill="#555"><rect x="48" y="27" width="5" height="4"/><rect x="56" y="25" width="5" height="4"/><rect x="64" y="26" width="5" height="4"/><rect x="52" y="35" width="5" height="4"/><rect x="60" y="33" width="5" height="4"/><rect x="68" y="34" width="5" height="4"/></g>
<path d="M30 58 L80 66 L88 72 L12 62z" fill="#dcdce0" opacity="0.6"/>
</svg>
<div class="a tj" style="left:90px;top:20.86px;width:135px;height:7.68px;line-height:7.68px;font-size:5.41px;color:#000;-webkit-text-stroke:0.3px #000;">حرکت استفاده یا تلویزیون حرکت استفاده ماهواره ماهواره عکس فراوان جزوه جنگ خاص در دهند خاص جنگ استکباری</div>
<div class="a tj" style="left:90px;top:29.16px;width:135px;height:7.68px;line-height:7.68px;font-size:5.41px;color:#000;-webkit-text-stroke:0.3px #000;">جنگ کلیهٔ را بلندی تا این از به گروهی ماهواره سپاهیان کتاب آتش خدا هواپیما جامعه فناوری ذهن</div>
<div class="a tj" style="left:205px;top:37.96px;width:20px;height:7.68px;line-height:7.68px;font-size:5.41px;color:#000;-webkit-text-stroke:0.3px #000;">روشن های سرمایه دشمن گیرند فراوان رسول</div>
<div class="a tj" style="left:90px;top:45.46px;width:135px;height:7.68px;line-height:7.68px;font-size:5.41px;color:#000;-webkit-text-stroke:0.3px #000;">اجتماعی اجتماعی تلفن اجتماعی تغییرات اندیشه ابوسفیان تلفن و بر عوامل گروه رادیو انجام لازم روزنامه اطراف دشمن</div>
<div class="a tj" style="left:90px;top:54.16px;width:135px;height:7.68px;line-height:7.68px;font-size:5.41px;color:#000;-webkit-text-stroke:0.3px #000;">تغییرات به خدا خاص سپاهیان ایجاد فیلم آتش های آن گروه آتش جزوه خاص ابوسفیان شود مجله مکه</div>
<div class="a tj" style="left:90px;top:62.66px;width:135px;height:7.68px;line-height:7.68px;font-size:5.41px;color:#000;-webkit-text-stroke:0.3px #000;">فیلم تفکر یک لازم را نوع اندیشه اندیشه تانک در گروهی تغییرات روزنامه این اندیشه فناوری انجام فکر</div>
<div class="a tj" style="left:200px;top:70.76px;width:25px;height:7.68px;line-height:7.68px;font-size:5.41px;color:#000;-webkit-text-stroke:0.3px #000;">فعالیت گروه مردم فیلم گروهی فناوری اسلام های</div>
<div class="a tj" style="left:28px;top:84.16px;width:196px;height:7.68px;line-height:7.68px;font-size:5.41px;color:#000;-webkit-text-stroke:0.3px #000;">مردم توپ قدرت جهت روز این فکر فیلم می عکس یابند سپاهیان اسلام یعنی رسانه ابوسفیان یابند آتش بر نرم تلفن جنگ جامعه فکر</div>
<div class="a tj" style="left:28px;top:92.66px;width:196px;height:7.68px;line-height:7.68px;font-size:5.41px;color:#000;-webkit-text-stroke:0.3px #000;">تغییر عکس های های استفاده تفکر این بر فناوری مکه مجله بهره گسترده مجله فیلم در یابند تغییرات جنگ تفکر جامعه روزنامه گروه اندیشه</div>
<div class="a tj" style="left:148px;top:101.16px;width:76px;height:7.68px;line-height:7.68px;font-size:5.41px;color:#000;-webkit-text-stroke:0.3px #000;">روشن آتش به اندیشه های مجله قدرت در استکباری یک شبکه ای جامعه</div>
<div class="a tj" style="left:17px;top:109.86px;width:207px;height:7.68px;line-height:7.68px;font-size:5.41px;color:#000;-webkit-text-stroke:0.3px #000;">اندیشه دهند تلویزیون ابوسفیان رسانه جهت گسترده اجتماعی نوع تلفن در گسترده انجام می جامعه های خاص بلندی نوع های گروهی آتش اطراف تفکر استکباری</div>
<div class="a tj" style="left:17px;top:117.16px;width:207px;height:7.68px;line-height:7.68px;font-size:5.41px;color:#000;-webkit-text-stroke:0.3px #000;">مجله خاص حرکت حرکت جامعه فعالیت کلیهٔ گسترده های تغییرات مردم یا تلویزیون بر تسلط های شود تسلط تفنگ یعنی نرم بلندی موشک این اسلام</div>
<div class="a tj" style="left:210px;top:126.16px;width:14px;height:7.68px;line-height:7.68px;font-size:5.41px;color:#000;-webkit-text-stroke:0.3px #000;">ماهواره جامعه و عکس گیرند استکباری بالای</div>
<div class="a" style="left:15px;top:137px;width:196px;height:37px;border:1px solid #111;border-radius:6px"></div>
<div class="a" style="left:150px;top:136.94px;width:57px;height:11.31px;line-height:11.31px;direction:rtl;white-space:nowrap;overflow:visible;text-align:right;font-size:7.8px;color:#1a9ad8;font-weight:bold;text-decoration:underline;-webkit-text-stroke:0.3px #1a9ad8">فعالیت (۱)</div>
<div class="a tj" style="left:23px;top:149.03px;width:183px;height:10.73px;line-height:10.73px;font-size:7.55px;color:#1f3568;-webkit-text-stroke:0.05px #1f3568;">سخنان مقام معظم رهبری را دربارهٔ جنگ نرم جست وجو کنید</div>
<div class="a" style="left:100px;top:160.56px;width:106px;height:10.88px;line-height:10.88px;direction:rtl;white-space:nowrap;overflow:visible;text-align:right;font-size:7.5px;color:#1f3568;font-weight:normal;">و دربارهٔ آن به بحث بپردازید.</div>
<div class="a" style="left:214px;top:150px;width:14px;height:14px;border-radius:50%;background:#1a6ccc"></div></div>
<div class="a num" style="left:1346px;top:201px">5</div>
<svg class="a" style="left:1151px;top:204px" width="13" height="10" viewBox="0 0 13 10"><path d="M0 1.8h3M0 4.6h2.6M0 7.4h2.6" stroke="#1e1e1e" stroke-width="1"/><path d="M7.30 0.80 L8.43 3.70 L11.76 3.85 L9.10 5.95 L10.04 9.15 L7.30 7.40 L4.56 9.15 L5.50 5.95 L2.84 3.85 L6.17 3.70z" fill="none" stroke="#1e1e1e" stroke-width="1" stroke-linejoin="round"/></svg>
<div class="a slide" id="s6" style="left:32px;top:229px"><div class="a" style="left:1px;top:0;width:2px;height:180px;background:#c2c5ec"></div><div class="a" style="left:230px;top:0;width:1px;height:180px;background:#bcc0e6"></div><div class="a" style="left:232px;top:0;width:8px;height:180px;background:#b3c5ec"></div><div class="a" style="left:233.5px;top:0;width:1.6px;height:180px;background:#1f6fd2"></div>
<div class="a tj" style="left:17px;top:12.21px;width:194px;height:9.57px;line-height:9.57px;font-size:6.73px;color:#000;-webkit-text-stroke:0.15px #000;">فکر ماهواره یعنی جامعه سپاهیان خاص مردم ذهن فعالیت رادیو تا مکه به خاص دهند گروهی تفکر روشن گسترده یک</div>
<div class="a tj" style="left:17px;top:23.21px;width:194px;height:9.57px;line-height:9.57px;font-size:6.73px;color:#000;-webkit-text-stroke:0.15px #000;">رسول و موشک فراوان فکر مردم رسول اندیشه تغییرات رسول و گفته بر استفاده که ایجاد یعنی بهره رسول های</div>
<div class="a tj" style="left:17px;top:34.22px;width:194px;height:9.57px;line-height:9.57px;font-size:6.73px;color:#000;-webkit-text-stroke:0.15px #000;">عوامل رادیو موشک آتش یعنی مکه ذهن جامعه فناوری استفاده بهره ذهن سپاهیان اندیشه یعنی گفته روز فکر این رسول</div>
<div class="a tj" style="left:17px;top:46.22px;width:194px;height:9.57px;line-height:9.57px;font-size:6.73px;color:#000;-webkit-text-stroke:0.15px #000;">جامعه بهره یا ماهواره یک اجتماعی رادیو هواپیما آن نظامی نرم اینترنت آن تسلط نظامی توپ یک خاص ای قدرت</div>
<div class="a tj" style="left:17px;top:57.22px;width:194px;height:9.57px;line-height:9.57px;font-size:6.73px;color:#000;-webkit-text-stroke:0.15px #000;">استکباری فیلم گروهی شود یا نوع یابند ایجاد اجتماعی را انجام نظامی یابند انجام ماهواره تلویزیون ذهن تلفن روزنامه ماهواره</div>
<div class="a tj" style="left:17px;top:68.22px;width:194px;height:9.57px;line-height:9.57px;font-size:6.73px;color:#000;-webkit-text-stroke:0.15px #000;">جامعه عکس هواپیما جهت گسترده فیلم فعالیت روزنامه حرکت گیرند رادیو ماهواره فعالیت شبکه رسانه فکر روشن تفنگ ذهن عوامل</div>
<div class="a tj" style="left:17px;top:79.22px;width:194px;height:9.57px;line-height:9.57px;font-size:6.73px;color:#000;-webkit-text-stroke:0.15px #000;">لازم جنگ تغییرات در این جای که تا جای جامعه اینترنت سرمایه این تلفن خاص سپاهیان ذهن شب تغییر روز</div>
<div class="a tj" style="left:48px;top:90.72px;width:163px;height:9.57px;line-height:9.57px;font-size:6.73px;color:#000;-webkit-text-stroke:0.15px #000;">موشک جهت استفاده و فناوری تا اینترنت آن جای فعالیت ابوسفیان جهت این در مکه یابند عوامل این</div>
<svg class="a" style="left:0;top:0" width="240" height="180" viewBox="0 0 240 180">
<defs><linearGradient id="s6b" x1="0" y1="0" x2="1" y2="1"><stop offset="0" stop-color="#1a90d0"/><stop offset="0.5" stop-color="#1a70b0"/><stop offset="1" stop-color="#0f5a98"/></linearGradient>
<linearGradient id="s6r" x1="0" y1="0" x2="0" y2="1"><stop offset="0" stop-color="#ffffff" stop-opacity="0.0"/><stop offset="0" stop-color="#a8c4d8" stop-opacity="0.5"/><stop offset="1" stop-color="#fff" stop-opacity="0"/></linearGradient></defs>
<rect x="38.6" y="107" width="57.4" height="48.5" rx="3" fill="url(#s6b)"/>
<path d="M45 112 h28 M48 117 h22" stroke="#f0d040" stroke-width="1.4"/>
<path d="M55 150 L90 120" stroke="#c8d870" stroke-width="5"/>
<path d="M57 135 L84 118" stroke="#e0e8b0" stroke-width="3"/>
<path d="M40 140 h20 M40 146 h22 M40 134 h18" stroke="#6ac0f0" stroke-width="0.6"/>
<ellipse cx="67.2" cy="138.9" rx="2.6" ry="1.6" fill="#c0e060" opacity="0.75"/><ellipse cx="84.2" cy="120.9" rx="1.7" ry="1.1" fill="#203040" opacity="0.75"/><ellipse cx="58.1" cy="125.7" rx="2.3" ry="2.8" fill="#0a4a80" opacity="0.75"/><ellipse cx="74.9" cy="131.5" rx="1.9" ry="1.3" fill="#203040" opacity="0.75"/><ellipse cx="56.3" cy="129.9" rx="3.0" ry="1.7" fill="#c0e060" opacity="0.75"/><ellipse cx="74.0" cy="145.9" rx="2.3" ry="1.4" fill="#80c8f0" opacity="0.75"/><ellipse cx="54.2" cy="133.9" rx="1.3" ry="1.1" fill="#c0e060" opacity="0.75"/><ellipse cx="66.6" cy="138.3" rx="1.2" ry="1.6" fill="#0a4a80" opacity="0.75"/><ellipse cx="63.3" cy="123.7" rx="1.7" ry="1.1" fill="#40b0e0" opacity="0.75"/><ellipse cx="46.3" cy="132.0" rx="1.7" ry="2.7" fill="#c0e060" opacity="0.75"/><ellipse cx="63.2" cy="133.5" rx="1.3" ry="1.8" fill="#0a4a80" opacity="0.75"/><ellipse cx="91.6" cy="130.4" rx="2.0" ry="2.9" fill="#0a4a80" opacity="0.75"/><ellipse cx="92.6" cy="132.5" rx="1.4" ry="1.7" fill="#40b0e0" opacity="0.75"/><ellipse cx="86.0" cy="152.7" rx="2.9" ry="2.0" fill="#203040" opacity="0.75"/><ellipse cx="44.2" cy="123.7" rx="1.4" ry="2.8" fill="#0a4a80" opacity="0.75"/><ellipse cx="73.5" cy="145.1" rx="1.5" ry="1.4" fill="#80c8f0" opacity="0.75"/><ellipse cx="65.0" cy="130.9" rx="1.2" ry="2.7" fill="#40b0e0" opacity="0.75"/><ellipse cx="45.9" cy="133.7" rx="1.3" ry="2.8" fill="#40b0e0" opacity="0.75"/><ellipse cx="72.5" cy="123.1" rx="2.2" ry="1.3" fill="#c0e060" opacity="0.75"/><ellipse cx="45.9" cy="125.8" rx="2.7" ry="1.8" fill="#203040" opacity="0.75"/><ellipse cx="52.8" cy="135.8" rx="2.9" ry="2.2" fill="#80c8f0" opacity="0.75"/><ellipse cx="83.2" cy="145.6" rx="2.6" ry="2.7" fill="#c0e060" opacity="0.75"/><ellipse cx="81.8" cy="136.6" rx="2.0" ry="2.4" fill="#80c8f0" opacity="0.75"/><ellipse cx="73.4" cy="121.8" rx="1.7" ry="1.9" fill="#c0e060" opacity="0.75"/><ellipse cx="82.8" cy="149.7" rx="2.1" ry="2.9" fill="#203040" opacity="0.75"/><ellipse cx="78.0" cy="151.8" rx="2.1" ry="1.6" fill="#80c8f0" opacity="0.75"/><ellipse cx="73.9" cy="153.3" rx="2.3" ry="1.6" fill="#80c8f0" opacity="0.75"/><ellipse cx="90.9" cy="126.1" rx="2.9" ry="1.8" fill="#0a4a80" opacity="0.75"/><ellipse cx="48.2" cy="150.7" rx="1.3" ry="2.4" fill="#203040" opacity="0.75"/><ellipse cx="45.6" cy="142.8" rx="1.7" ry="2.2" fill="#80c8f0" opacity="0.75"/><ellipse cx="66.3" cy="127.2" rx="1.7" ry="2.4" fill="#40b0e0" opacity="0.75"/><ellipse cx="55.6" cy="140.1" rx="2.5" ry="1.2" fill="#203040" opacity="0.75"/><ellipse cx="91.2" cy="141.7" rx="2.0" ry="1.4" fill="#0a4a80" opacity="0.75"/><ellipse cx="70.8" cy="137.5" rx="2.1" ry="1.6" fill="#203040" opacity="0.75"/><ellipse cx="55.8" cy="121.1" rx="2.2" ry="2.6" fill="#c0e060" opacity="0.75"/><ellipse cx="51.8" cy="136.3" rx="1.6" ry="1.8" fill="#80c8f0" opacity="0.75"/><ellipse cx="57.1" cy="130.1" rx="1.6" ry="1.7" fill="#80c8f0" opacity="0.75"/><ellipse cx="73.5" cy="137.4" rx="1.4" ry="2.8" fill="#0a4a80" opacity="0.75"/><ellipse cx="72.7" cy="131.5" rx="1.4" ry="1.2" fill="#80c8f0" opacity="0.75"/><ellipse cx="72.2" cy="145.2" rx="2.6" ry="1.4" fill="#80c8f0" opacity="0.75"/><ellipse cx="93.9" cy="138.6" rx="2.6" ry="1.2" fill="#0a4a80" opacity="0.75"/><ellipse cx="64.3" cy="131.5" rx="2.8" ry="1.8" fill="#0a4a80" opacity="0.75"/><ellipse cx="55.8" cy="122.6" rx="1.4" ry="1.4" fill="#0a4a80" opacity="0.75"/><ellipse cx="44.8" cy="147.7" rx="2.9" ry="1.7" fill="#40b0e0" opacity="0.75"/><ellipse cx="89.4" cy="127.9" rx="1.9" ry="3.0" fill="#80c8f0" opacity="0.75"/>
<rect x="38.6" y="156" width="57.4" height="11" fill="url(#s6r)"/>
<path d="M140 114 L197 116 Q200 117 199 120 L197 152 Q196 155 193 155 L139 153 Q136 153 136 150 L137 117 Q137 114 140 114z" fill="#c81e24"/>
<path d="M137 151 L196 154 L197 157 L138 155z" fill="#8a1014"/>
<path d="M150 150 c-8 -5 -6 -20 5 -26 c12 -6 30 -4 35 6 c3 6 0 14 -6 16 l-2 4z" fill="#a0c860" stroke="#e8e0c0" stroke-width="0.8"/>
<circle cx="168" cy="134" r="6" fill="none" stroke="#333" stroke-width="0.8"/>
<path d="M158 134 h20 M168 124 v20" stroke="#333" stroke-width="0.5"/>
<rect x="153" y="117" width="24" height="4" fill="#e8d8c0" opacity="0.8"/>
</svg>
<div class="a" style="left:214px;top:150px;width:14px;height:14px;border-radius:50%;background:#1a6ccc"></div></div>
<div class="a num" style="left:226px;top:418px">6</div>
<svg class="a" style="left:31px;top:421px" width="13" height="10" viewBox="0 0 13 10"><path d="M0 1.8h3M0 4.6h2.6M0 7.4h2.6" stroke="#1e1e1e" stroke-width="1"/><path d="M7.30 0.80 L8.43 3.70 L11.76 3.85 L9.10 5.95 L10.04 9.15 L7.30 7.40 L4.56 9.15 L5.50 5.95 L2.84 3.85 L6.17 3.70z" fill="none" stroke="#1e1e1e" stroke-width="1" stroke-linejoin="round"/></svg>
<div class="a slide" id="s7" style="left:312px;top:229px"><div class="a" style="left:1px;top:0;width:2px;height:180px;background:#c2c5ec"></div><div class="a" style="left:230px;top:0;width:1px;height:180px;background:#bcc0e6"></div><div class="a" style="left:232px;top:0;width:8px;height:180px;background:#b3c5ec"></div><div class="a" style="left:233.5px;top:0;width:1.6px;height:180px;background:#1f6fd2"></div>
<svg class="a" style="left:0;top:0" width="240" height="180" viewBox="0 0 240 180">
<defs><clipPath id="s7c"><rect x="19" y="105" width="58" height="48"/></clipPath><filter id="bl7"><feGaussianBlur stdDeviation="0.5"/></filter></defs>
<path d="M74 9.6 L135 3.2 L138 40.7 L77 46z" fill="#fafafa" stroke="#d0d0d0" stroke-width="0.6"/>
<g filter="url(#bl7)">
<ellipse cx="98.9" cy="28.1" rx="1.5" ry="4.0" fill="#a0a0a0" opacity="0.8"/><ellipse cx="118.8" cy="17.2" rx="1.7" ry="2.8" fill="#8090b0" opacity="0.8"/><ellipse cx="92.9" cy="12.6" rx="3.2" ry="2.4" fill="#a0a0a0" opacity="0.8"/><ellipse cx="105.0" cy="15.4" rx="3.1" ry="1.6" fill="#8090b0" opacity="0.8"/><ellipse cx="85.4" cy="28.9" rx="2.0" ry="1.9" fill="#a0a0a0" opacity="0.8"/><ellipse cx="104.1" cy="36.6" rx="4.0" ry="3.2" fill="#e8a020" opacity="0.8"/><ellipse cx="111.8" cy="16.1" rx="3.5" ry="3.7" fill="#60a040" opacity="0.8"/><ellipse cx="97.7" cy="12.5" rx="2.4" ry="2.5" fill="#f0d040" opacity="0.8"/><ellipse cx="88.5" cy="14.6" rx="1.8" ry="2.7" fill="#a0a0a0" opacity="0.8"/><ellipse cx="110.0" cy="34.1" rx="2.2" ry="1.7" fill="#60a040" opacity="0.8"/><ellipse cx="112.6" cy="16.2" rx="2.6" ry="2.9" fill="#60a040" opacity="0.8"/><ellipse cx="88.4" cy="31.5" rx="3.1" ry="3.1" fill="#f8f0a0" opacity="0.8"/><ellipse cx="118.3" cy="12.6" rx="3.6" ry="2.1" fill="#60a040" opacity="0.8"/><ellipse cx="116.2" cy="25.1" rx="2.8" ry="2.3" fill="#e8a020" opacity="0.8"/><ellipse cx="96.4" cy="15.7" rx="1.6" ry="2.8" fill="#e8a020" opacity="0.8"/><ellipse cx="89.9" cy="27.6" rx="2.0" ry="3.1" fill="#60a040" opacity="0.8"/><ellipse cx="121.8" cy="23.1" rx="2.1" ry="2.4" fill="#f8f0a0" opacity="0.8"/><ellipse cx="98.7" cy="24.6" rx="3.7" ry="2.7" fill="#a0a0a0" opacity="0.8"/><ellipse cx="102.8" cy="23.8" rx="3.1" ry="2.8" fill="#f8f0a0" opacity="0.8"/><ellipse cx="127.8" cy="29.8" rx="1.6" ry="2.6" fill="#60a040" opacity="0.8"/><ellipse cx="95.4" cy="27.5" rx="3.2" ry="3.8" fill="#f8f0a0" opacity="0.8"/><ellipse cx="110.4" cy="33.6" rx="3.0" ry="1.6" fill="#d04030" opacity="0.8"/><ellipse cx="88.7" cy="25.9" rx="3.1" ry="2.3" fill="#f8f0a0" opacity="0.8"/><ellipse cx="109.3" cy="31.9" rx="3.3" ry="3.1" fill="#a0a0a0" opacity="0.8"/><ellipse cx="96.4" cy="20.3" rx="3.2" ry="2.1" fill="#8090b0" opacity="0.8"/><ellipse cx="88.8" cy="23.7" rx="2.7" ry="3.4" fill="#60a040" opacity="0.8"/><ellipse cx="106.9" cy="24.5" rx="3.8" ry="3.2" fill="#a0a0a0" opacity="0.8"/><ellipse cx="125.5" cy="22.3" rx="2.6" ry="2.7" fill="#e8a020" opacity="0.8"/><ellipse cx="112.3" cy="15.3" rx="2.9" ry="2.8" fill="#f8f0a0" opacity="0.8"/><ellipse cx="104.8" cy="15.8" rx="3.7" ry="2.0" fill="#d04030" opacity="0.8"/><ellipse cx="118.5" cy="21.4" rx="1.5" ry="3.7" fill="#e8a020" opacity="0.8"/><ellipse cx="89.9" cy="31.8" rx="3.1" ry="3.2" fill="#d04030" opacity="0.8"/><ellipse cx="107.2" cy="12.7" rx="2.4" ry="2.5" fill="#f8f0a0" opacity="0.8"/><ellipse cx="96.6" cy="29.0" rx="3.3" ry="3.4" fill="#8090b0" opacity="0.8"/><ellipse cx="126.9" cy="33.0" rx="3.5" ry="3.3" fill="#60a040" opacity="0.8"/><ellipse cx="129.4" cy="16.9" rx="3.6" ry="3.0" fill="#f8f0a0" opacity="0.8"/><ellipse cx="124.0" cy="25.9" rx="2.2" ry="1.7" fill="#a0a0a0" opacity="0.8"/><ellipse cx="97.1" cy="32.1" rx="3.3" ry="3.1" fill="#f8f0a0" opacity="0.8"/><ellipse cx="111.0" cy="31.9" rx="1.6" ry="2.1" fill="#f8f0a0" opacity="0.8"/><ellipse cx="94.6" cy="19.4" rx="2.3" ry="2.0" fill="#f8f0a0" opacity="0.8"/>
<rect x="96" y="19" width="20" height="15" rx="3" fill="#2a3a60" transform="rotate(-6 106 26)"/>
<rect x="99" y="22" width="13" height="9" rx="2" fill="#5a7ab0" transform="rotate(-6 106 26)"/>
</g>
<g clip-path="url(#s7c)"><g filter="url(#bl7)">
<rect x="15" y="100" width="66" height="58" fill="#a8a8a2"/>
<ellipse cx="23.3" cy="133.5" rx="3.0" ry="1.7" fill="#d8d8d0" opacity="0.7"/><ellipse cx="54.9" cy="119.7" rx="2.4" ry="3.0" fill="#8a8a84" opacity="0.7"/><ellipse cx="75.6" cy="138.7" rx="1.7" ry="1.8" fill="#c8c8c0" opacity="0.7"/><ellipse cx="59.1" cy="115.7" rx="2.6" ry="1.9" fill="#b8b8b0" opacity="0.7"/><ellipse cx="24.3" cy="120.2" rx="1.0" ry="1.8" fill="#b8b8b0" opacity="0.7"/><ellipse cx="34.6" cy="122.8" rx="1.7" ry="2.0" fill="#8a8a84" opacity="0.7"/><ellipse cx="39.3" cy="128.9" rx="1.4" ry="2.9" fill="#d8d8d0" opacity="0.7"/><ellipse cx="38.5" cy="126.8" rx="2.7" ry="1.1" fill="#b8b8b0" opacity="0.7"/><ellipse cx="43.3" cy="123.1" rx="2.7" ry="1.3" fill="#c8c8c0" opacity="0.7"/><ellipse cx="75.0" cy="128.5" rx="2.7" ry="2.1" fill="#d8d8d0" opacity="0.7"/><ellipse cx="69.7" cy="149.9" rx="1.5" ry="2.6" fill="#707068" opacity="0.7"/><ellipse cx="51.4" cy="138.7" rx="1.5" ry="1.7" fill="#707068" opacity="0.7"/><ellipse cx="22.2" cy="119.6" rx="1.6" ry="1.7" fill="#8a8a84" opacity="0.7"/><ellipse cx="64.4" cy="129.1" rx="2.8" ry="2.9" fill="#c8c8c0" opacity="0.7"/><ellipse cx="43.4" cy="136.7" rx="1.1" ry="2.0" fill="#d8d8d0" opacity="0.7"/><ellipse cx="20.0" cy="114.7" rx="2.7" ry="2.7" fill="#8a8a84" opacity="0.7"/><ellipse cx="26.1" cy="144.8" rx="1.5" ry="2.2" fill="#8a8a84" opacity="0.7"/><ellipse cx="63.8" cy="130.5" rx="2.0" ry="1.3" fill="#c8c8c0" opacity="0.7"/><ellipse cx="53.5" cy="142.0" rx="2.9" ry="2.4" fill="#b8b8b0" opacity="0.7"/><ellipse cx="75.4" cy="132.2" rx="2.7" ry="1.1" fill="#707068" opacity="0.7"/><ellipse cx="28.7" cy="130.0" rx="1.8" ry="2.6" fill="#c8c8c0" opacity="0.7"/><ellipse cx="39.5" cy="109.0" rx="1.4" ry="2.1" fill="#b8b8b0" opacity="0.7"/><ellipse cx="45.7" cy="130.6" rx="1.4" ry="3.0" fill="#c8c8c0" opacity="0.7"/><ellipse cx="60.6" cy="137.4" rx="2.5" ry="1.3" fill="#707068" opacity="0.7"/><ellipse cx="21.4" cy="106.5" rx="2.2" ry="2.4" fill="#b8b8b0" opacity="0.7"/><ellipse cx="69.0" cy="139.5" rx="2.1" ry="1.1" fill="#8a8a84" opacity="0.7"/><ellipse cx="57.4" cy="115.0" rx="2.7" ry="1.1" fill="#c8c8c0" opacity="0.7"/><ellipse cx="67.8" cy="119.5" rx="2.6" ry="1.1" fill="#c8c8c0" opacity="0.7"/><ellipse cx="27.6" cy="152.4" rx="2.4" ry="2.5" fill="#d8d8d0" opacity="0.7"/><ellipse cx="38.2" cy="145.9" rx="1.2" ry="2.4" fill="#707068" opacity="0.7"/><ellipse cx="57.6" cy="152.7" rx="1.5" ry="2.4" fill="#c8c8c0" opacity="0.7"/><ellipse cx="43.4" cy="109.9" rx="1.8" ry="2.4" fill="#d8d8d0" opacity="0.7"/><ellipse cx="64.8" cy="119.3" rx="1.9" ry="1.7" fill="#8a8a84" opacity="0.7"/><ellipse cx="73.6" cy="112.8" rx="1.2" ry="2.2" fill="#d8d8d0" opacity="0.7"/><ellipse cx="47.5" cy="111.5" rx="2.3" ry="2.9" fill="#d8d8d0" opacity="0.7"/><ellipse cx="54.2" cy="135.0" rx="2.6" ry="2.5" fill="#8a8a84" opacity="0.7"/><ellipse cx="48.5" cy="140.9" rx="2.3" ry="1.1" fill="#8a8a84" opacity="0.7"/><ellipse cx="44.4" cy="120.5" rx="1.1" ry="1.9" fill="#8a8a84" opacity="0.7"/><ellipse cx="58.6" cy="139.3" rx="2.9" ry="2.1" fill="#b8b8b0" opacity="0.7"/><ellipse cx="39.6" cy="148.6" rx="2.1" ry="1.1" fill="#d8d8d0" opacity="0.7"/><ellipse cx="42.2" cy="135.7" rx="2.8" ry="2.9" fill="#8a8a84" opacity="0.7"/><ellipse cx="48.4" cy="140.7" rx="2.5" ry="2.0" fill="#707068" opacity="0.7"/><ellipse cx="24.9" cy="152.9" rx="2.0" ry="2.5" fill="#8a8a84" opacity="0.7"/><ellipse cx="50.1" cy="129.6" rx="2.4" ry="1.6" fill="#c8c8c0" opacity="0.7"/><ellipse cx="71.5" cy="137.1" rx="2.3" ry="1.8" fill="#c8c8c0" opacity="0.7"/><ellipse cx="41.6" cy="149.5" rx="2.0" ry="2.9" fill="#c8c8c0" opacity="0.7"/><ellipse cx="57.4" cy="132.5" rx="1.3" ry="2.7" fill="#8a8a84" opacity="0.7"/><ellipse cx="31.5" cy="121.5" rx="1.4" ry="1.4" fill="#d8d8d0" opacity="0.7"/><ellipse cx="64.5" cy="128.5" rx="2.6" ry="2.4" fill="#707068" opacity="0.7"/><ellipse cx="60.8" cy="110.6" rx="2.7" ry="2.8" fill="#8a8a84" opacity="0.7"/><ellipse cx="72.3" cy="109.3" rx="3.0" ry="2.8" fill="#707068" opacity="0.7"/><ellipse cx="42.2" cy="143.8" rx="2.5" ry="2.1" fill="#c8c8c0" opacity="0.7"/><ellipse cx="26.8" cy="137.5" rx="2.9" ry="1.9" fill="#c8c8c0" opacity="0.7"/><ellipse cx="55.2" cy="115.4" rx="3.0" ry="1.8" fill="#d8d8d0" opacity="0.7"/><ellipse cx="70.7" cy="119.8" rx="1.3" ry="2.9" fill="#8a8a84" opacity="0.7"/><ellipse cx="19.3" cy="114.9" rx="1.6" ry="1.3" fill="#d8d8d0" opacity="0.7"/><ellipse cx="65.5" cy="151.7" rx="2.2" ry="2.3" fill="#d8d8d0" opacity="0.7"/><ellipse cx="20.2" cy="107.2" rx="1.4" ry="2.0" fill="#d8d8d0" opacity="0.7"/><ellipse cx="71.1" cy="135.6" rx="1.7" ry="1.6" fill="#707068" opacity="0.7"/><ellipse cx="30.8" cy="135.3" rx="2.2" ry="1.3" fill="#d8d8d0" opacity="0.7"/><ellipse cx="68.6" cy="143.6" rx="1.8" ry="2.3" fill="#8a8a84" opacity="0.7"/><ellipse cx="64.3" cy="142.3" rx="1.2" ry="1.5" fill="#8a8a84" opacity="0.7"/><ellipse cx="24.7" cy="147.1" rx="3.0" ry="2.4" fill="#b8b8b0" opacity="0.7"/><ellipse cx="67.6" cy="118.3" rx="2.8" ry="1.7" fill="#c8c8c0" opacity="0.7"/><ellipse cx="27.5" cy="149.3" rx="1.1" ry="2.8" fill="#707068" opacity="0.7"/><ellipse cx="38.6" cy="107.4" rx="1.5" ry="2.1" fill="#707068" opacity="0.7"/><ellipse cx="24.9" cy="151.7" rx="1.8" ry="1.4" fill="#b8b8b0" opacity="0.7"/><ellipse cx="44.3" cy="149.0" rx="1.8" ry="2.2" fill="#d8d8d0" opacity="0.7"/><ellipse cx="76.5" cy="125.5" rx="2.6" ry="2.5" fill="#b8b8b0" opacity="0.7"/><ellipse cx="21.3" cy="132.8" rx="2.1" ry="1.1" fill="#c8c8c0" opacity="0.7"/>
<path d="M38 148 c-6 -10 -4 -24 10 -28 c12 -3 20 6 20 18 l-3 10z" fill="#4a5468"/>
<path d="M40 134 c4 -2 10 -2 16 0" stroke="#1a1a20" stroke-width="2.5" fill="none"/>
<path d="M47 118 c4 -8 16 -10 20 -2 c4 8 4 20 2 32" stroke="#141414" stroke-width="6" fill="none"/>
<path d="M44 146 l20 2" stroke="#2a2a30" stroke-width="2"/>
</g></g>
</svg>
<div class="a tj" style="left:31px;top:44.16px;width:174px;height:7.68px;line-height:7.68px;font-size:5.41px;color:#000;-webkit-text-stroke:0.3px #000;">یک گیرند کلیهٔ روزنامه حرکت ماهواره جای روشن جامعه که مردم ماهواره نرم لازم انجام این دشمن تا جامعه تانک کنند تانک</div>
<div class="a tj" style="left:31px;top:53.66px;width:174px;height:7.68px;line-height:7.68px;font-size:5.41px;color:#000;-webkit-text-stroke:0.3px #000;">مردم گروه تفنگ بهره یعنی سرمایه دهند جای مجله فعالیت شود غیرنظامی کلیهٔ فعالیت یعنی حرکت بر ذهن تفکر گفته بهره تغییرات</div>
<div class="a tj" style="left:31px;top:62.66px;width:174px;height:7.68px;line-height:7.68px;font-size:5.41px;color:#000;-webkit-text-stroke:0.3px #000;">استکباری های تلویزیون استکباری تغییر اسلام اجتماعی یعنی تانک فناوری تسلط جنگ روزنامه جامعه ماهواره ابوسفیان یا تلفن مجله دشمن جامعه کلیهٔ</div>
<div class="a tj" style="left:31px;top:71.16px;width:174px;height:7.68px;line-height:7.68px;font-size:5.41px;color:#000;-webkit-text-stroke:0.3px #000;">آن کنند شود تلویزیون انجام و در نظامی جزوه یعنی نظامی از اطراف گفته فناوری تفنگ که گیرند تا انجام جای بهره</div>
<div class="a tj" style="left:94px;top:80.16px;width:111px;height:7.68px;line-height:7.68px;font-size:5.41px;color:#000;-webkit-text-stroke:0.3px #000;">به این فیلم رسانه حرکت موشک گفته غیرنظامی تانک تسلط عکس تا به رسانه جزوه در</div>
<div class="a" style="left:180px;top:93.39px;width:37px;height:8.41px;line-height:8.41px;direction:rtl;white-space:nowrap;overflow:visible;text-align:right;font-size:5.8px;color:#e0101a;font-weight:bold;text-decoration:underline">جنگ روانی</div>
<div class="a tj" style="left:89px;top:102.16px;width:127px;height:7.68px;line-height:7.68px;font-size:5.41px;color:#000;-webkit-text-stroke:0.3px #000;">تفکر استفاده یعنی های جامعه گفته یعنی به جهت این جهت گروهی تلفن بلندی که اجتماعی فعالیت توپ</div>
<div class="a tj" style="left:89px;top:111.16px;width:127px;height:7.68px;line-height:7.68px;font-size:5.41px;color:#000;-webkit-text-stroke:0.3px #000;">توپ کنند جنگ در بالای مردم خاص استکباری ای اطراف شبکه موشک گسترده تغییر خاص از گسترده روشن</div>
<div class="a tj" style="left:89px;top:120.16px;width:127px;height:7.68px;line-height:7.68px;font-size:5.41px;color:#000;-webkit-text-stroke:0.3px #000;">قدرت گروهی که ای ذهن کنند اینترنت روز یعنی یا مردم یعنی خدا فعالیت فراوان بالای ای فراوان</div>
<div class="a tj" style="left:89px;top:128.66px;width:127px;height:7.68px;line-height:7.68px;font-size:5.41px;color:#000;-webkit-text-stroke:0.3px #000;">فناوری قدرت جنگ در های که یا ابوسفیان فیلم تغییرات جزوه بهره رسول دشمن کنند فعالیت کنند سپاهیان</div>
<div class="a tj" style="left:89px;top:137.16px;width:127px;height:7.68px;line-height:7.68px;font-size:5.41px;color:#000;-webkit-text-stroke:0.3px #000;">فراوان گفته را این به گیرند عوامل یعنی سپاهیان جهت استکباری مردم عوامل تفکر شود آن این نرم</div>
<div class="a tj" style="left:123px;top:146.16px;width:93px;height:7.68px;line-height:7.68px;font-size:5.41px;color:#000;-webkit-text-stroke:0.3px #000;">گروه جنگ های گیرند تغییر جزوه آن اندیشه فراوان از که آتش کنند قدرت</div>
<div class="a" style="left:214px;top:150px;width:14px;height:14px;border-radius:50%;background:#1a6ccc"></div></div>
<div class="a num" style="left:506px;top:418px">7</div>
<svg class="a" style="left:311px;top:421px" width="13" height="10" viewBox="0 0 13 10"><path d="M0 1.8h3M0 4.6h2.6M0 7.4h2.6" stroke="#1e1e1e" stroke-width="1"/><path d="M7.30 0.80 L8.43 3.70 L11.76 3.85 L9.10 5.95 L10.04 9.15 L7.30 7.40 L4.56 9.15 L5.50 5.95 L2.84 3.85 L6.17 3.70z" fill="none" stroke="#1e1e1e" stroke-width="1" stroke-linejoin="round"/></svg>
<div class="a slide" id="s8" style="left:592px;top:229px"><div class="a" style="left:1px;top:0;width:2px;height:180px;background:#c2c5ec"></div><div class="a" style="left:230px;top:0;width:1px;height:180px;background:#bcc0e6"></div><div class="a" style="left:232px;top:0;width:8px;height:180px;background:#b3c5ec"></div><div class="a" style="left:233.5px;top:0;width:1.6px;height:180px;background:#1f6fd2"></div>
<svg class="a" style="left:0;top:0" width="240" height="180" viewBox="0 0 240 180">
<defs><linearGradient id="s8r" x1="0" y1="0" x2="0" y2="1"><stop offset="0" stop-color="#aaa" stop-opacity="0.55"/><stop offset="1" stop-color="#fff" stop-opacity="0"/></linearGradient>
<clipPath id="s8c"><path d="M64 10.7 L154 13 L154 63 L64 67.6z"/></clipPath><filter id="bl8"><feGaussianBlur stdDeviation="0.5"/></filter>
<linearGradient id="s8s" x1="0" y1="0" x2="1" y2="0"><stop offset="0" stop-color="#4a4a48"/><stop offset="0.3" stop-color="#8a8c8a"/><stop offset="0.6" stop-color="#c8ccd0"/><stop offset="1" stop-color="#9a9a98"/></linearGradient></defs>
<g clip-path="url(#s8c)"><g filter="url(#bl8)">
<rect x="60" y="8" width="100" height="62" fill="url(#s8s)"/>
<rect x="64" y="11" width="17" height="58" fill="#4e4e4a"/>
<path d="M110 40 l20 -10 24 4 v35 h-44z" fill="#6a706a" opacity="0.7"/>
<path d="M82 70 c0 -22 8 -30 18 -32 c12 -1 18 10 16 32z" fill="#3c302a"/>
<path d="M86 52 l24 -6 4 10 -24 8z" fill="#7a2a28"/>
<ellipse cx="99.2" cy="53.8" rx="2.1" ry="1.8" fill="#2a2220" opacity="0.85"/><ellipse cx="87.4" cy="53.7" rx="2.5" ry="2.2" fill="#5a3a30" opacity="0.85"/><ellipse cx="91.8" cy="51.3" rx="1.6" ry="1.3" fill="#2a2220" opacity="0.85"/><ellipse cx="89.2" cy="61.5" rx="2.8" ry="2.1" fill="#8a8070" opacity="0.85"/><ellipse cx="115.8" cy="62.2" rx="1.7" ry="1.8" fill="#8a8070" opacity="0.85"/><ellipse cx="104.1" cy="53.7" rx="2.4" ry="1.0" fill="#b0a898" opacity="0.85"/><ellipse cx="93.9" cy="51.1" rx="2.7" ry="2.2" fill="#2a2220" opacity="0.85"/><ellipse cx="87.5" cy="67.3" rx="2.3" ry="2.7" fill="#8a8070" opacity="0.85"/><ellipse cx="113.3" cy="47.8" rx="1.2" ry="1.4" fill="#8a8070" opacity="0.85"/><ellipse cx="103.2" cy="49.8" rx="2.7" ry="1.1" fill="#b0a898" opacity="0.85"/><ellipse cx="100.2" cy="45.5" rx="2.7" ry="1.8" fill="#8a8070" opacity="0.85"/><ellipse cx="83.2" cy="51.1" rx="2.9" ry="2.4" fill="#5a3a30" opacity="0.85"/><ellipse cx="112.7" cy="52.9" rx="1.2" ry="2.9" fill="#2a2220" opacity="0.85"/><ellipse cx="96.5" cy="47.1" rx="1.1" ry="2.5" fill="#b0a898" opacity="0.85"/><ellipse cx="105.5" cy="51.2" rx="1.6" ry="2.1" fill="#2a2220" opacity="0.85"/><ellipse cx="98.0" cy="55.4" rx="1.8" ry="2.6" fill="#8a8070" opacity="0.85"/><ellipse cx="91.3" cy="67.0" rx="2.6" ry="1.8" fill="#5a3a30" opacity="0.85"/><ellipse cx="96.6" cy="62.0" rx="2.5" ry="1.3" fill="#2a2220" opacity="0.85"/><ellipse cx="99.6" cy="46.3" rx="1.2" ry="2.6" fill="#5a3a30" opacity="0.85"/><ellipse cx="83.9" cy="62.0" rx="2.0" ry="1.3" fill="#b0a898" opacity="0.85"/><ellipse cx="87.8" cy="43.8" rx="3.0" ry="1.8" fill="#5a3a30" opacity="0.85"/><ellipse cx="105.4" cy="65.2" rx="3.0" ry="1.5" fill="#5a3a30" opacity="0.85"/><ellipse cx="106.7" cy="61.5" rx="1.2" ry="1.8" fill="#5a3a30" opacity="0.85"/><ellipse cx="98.7" cy="53.2" rx="1.1" ry="1.3" fill="#8a8070" opacity="0.85"/><ellipse cx="115.6" cy="55.5" rx="2.3" ry="1.3" fill="#8a8070" opacity="0.85"/><ellipse cx="103.4" cy="60.9" rx="2.7" ry="1.5" fill="#b0a898" opacity="0.85"/><ellipse cx="85.6" cy="59.7" rx="2.0" ry="1.1" fill="#8a8070" opacity="0.85"/><ellipse cx="87.7" cy="51.9" rx="1.9" ry="1.9" fill="#8a8070" opacity="0.85"/><ellipse cx="87.1" cy="65.1" rx="2.5" ry="1.9" fill="#b0a898" opacity="0.85"/><ellipse cx="90.6" cy="50.1" rx="2.1" ry="1.7" fill="#5a3a30" opacity="0.85"/>
<path d="M90 32 c-2 -12 10 -18 22 -12" stroke="#c0182a" stroke-width="5" fill="none"/>
<ellipse cx="101" cy="33" rx="7" ry="7" fill="#6a6a6a"/>
<path d="M96 36 h10 v5 h-10z" fill="#c8b8a8"/>
<path d="M118 70 c0 -18 6 -34 18 -36 c12 0 16 14 16 36z" fill="#a89a78"/>
<ellipse cx="124.9" cy="53.7" rx="2.0" ry="2.9" fill="#7a6a50" opacity="0.85"/><ellipse cx="146.9" cy="59.0" rx="1.3" ry="2.8" fill="#504838" opacity="0.85"/><ellipse cx="136.0" cy="63.5" rx="1.4" ry="2.1" fill="#7a6a50" opacity="0.85"/><ellipse cx="124.2" cy="42.4" rx="1.7" ry="1.7" fill="#504838" opacity="0.85"/><ellipse cx="123.0" cy="67.1" rx="2.7" ry="1.5" fill="#e8e0d0" opacity="0.85"/><ellipse cx="120.9" cy="50.3" rx="2.6" ry="2.6" fill="#504838" opacity="0.85"/><ellipse cx="133.1" cy="58.1" rx="2.8" ry="2.3" fill="#d8c890" opacity="0.85"/><ellipse cx="132.0" cy="43.2" rx="2.4" ry="1.5" fill="#d8c890" opacity="0.85"/><ellipse cx="127.2" cy="40.1" rx="1.2" ry="1.1" fill="#e8e0d0" opacity="0.85"/><ellipse cx="153.9" cy="51.3" rx="2.3" ry="1.8" fill="#d8c890" opacity="0.85"/><ellipse cx="130.2" cy="64.1" rx="2.6" ry="2.3" fill="#d8c890" opacity="0.85"/><ellipse cx="143.9" cy="52.9" rx="2.9" ry="1.2" fill="#504838" opacity="0.85"/><ellipse cx="144.8" cy="54.2" rx="1.2" ry="1.7" fill="#504838" opacity="0.85"/><ellipse cx="147.8" cy="51.0" rx="1.7" ry="1.1" fill="#504838" opacity="0.85"/><ellipse cx="132.5" cy="67.7" rx="2.6" ry="2.3" fill="#d8c890" opacity="0.85"/><ellipse cx="121.6" cy="52.4" rx="1.7" ry="1.4" fill="#504838" opacity="0.85"/><ellipse cx="137.1" cy="57.7" rx="1.7" ry="2.9" fill="#7a6a50" opacity="0.85"/><ellipse cx="126.7" cy="52.9" rx="2.5" ry="2.7" fill="#504838" opacity="0.85"/><ellipse cx="151.0" cy="42.5" rx="2.4" ry="2.4" fill="#e8e0d0" opacity="0.85"/><ellipse cx="142.2" cy="48.1" rx="1.3" ry="2.8" fill="#7a6a50" opacity="0.85"/><ellipse cx="152.8" cy="63.2" rx="1.9" ry="2.2" fill="#e8e0d0" opacity="0.85"/><ellipse cx="152.1" cy="43.2" rx="2.4" ry="2.4" fill="#e8e0d0" opacity="0.85"/><ellipse cx="132.1" cy="56.5" rx="2.2" ry="2.4" fill="#7a6a50" opacity="0.85"/><ellipse cx="129.8" cy="49.6" rx="3.0" ry="2.8" fill="#504838" opacity="0.85"/><ellipse cx="151.9" cy="59.4" rx="3.0" ry="1.9" fill="#504838" opacity="0.85"/><ellipse cx="121.4" cy="43.0" rx="1.4" ry="2.8" fill="#7a6a50" opacity="0.85"/><ellipse cx="120.3" cy="48.5" rx="1.2" ry="2.7" fill="#d8c890" opacity="0.85"/><ellipse cx="148.2" cy="66.6" rx="1.9" ry="2.8" fill="#d8c890" opacity="0.85"/><ellipse cx="128.1" cy="40.8" rx="3.0" ry="2.5" fill="#d8c890" opacity="0.85"/><ellipse cx="133.3" cy="41.5" rx="2.7" ry="1.4" fill="#504838" opacity="0.85"/>
<ellipse cx="140" cy="25" rx="9" ry="10" fill="#6a6a6a"/>
<path d="M134 18 c4 -6 12 -6 14 2" stroke="#3a3a3a" stroke-width="3" fill="none"/>
<path d="M134 27 h12 v9 h-12z" fill="#a8a8a8"/>
</g></g>
<rect x="64" y="68" width="90" height="12" fill="url(#s8r)"/>
</svg>
<div class="a tj" style="left:16px;top:83.16px;width:200.6px;height:7.68px;line-height:7.68px;font-size:5.41px;color:#000;-webkit-text-stroke:0.3px #000;">جامعه آن اطراف گروهی رسانه شود های فناوری توپ روشن خدا یا کلیهٔ اندیشه و را جای سرمایه ایجاد فناوری تسلط سرمایه را تفنگ ماهواره</div>
<div class="a tj" style="left:16px;top:91.66px;width:200.6px;height:7.68px;line-height:7.68px;font-size:5.41px;color:#000;-webkit-text-stroke:0.3px #000;">فکر از نوع نوع نوع یک حرکت جامعه تانک در تفکر فعالیت تفنگ گیرند آن یعنی بهره جای شبکه گروه گروه آن بالای جهت گروهی</div>
<div class="a tj" style="left:16px;top:100.86px;width:200.6px;height:7.68px;line-height:7.68px;font-size:5.41px;color:#000;-webkit-text-stroke:0.3px #000;">مردم این فیلم جامعه مکه کنند ذهن استفاده لازم ماهواره فیلم جنگ تغییر را اجتماعی های انجام به را فراوان بهره تلفن توپ گروهی ماهواره</div>
<div class="a tj" style="left:16px;top:108.76px;width:200.6px;height:7.68px;line-height:7.68px;font-size:5.41px;color:#000;-webkit-text-stroke:0.3px #000;">مجله جزوه هواپیما یک رسانه به موشک روزنامه اجتماعی یک جامعه ای کلیهٔ تفنگ شود کتاب عوامل اجتماعی شبکه بلندی آن فیلم اینترنت استفاده دشمن</div>
<div class="a tj" style="left:16px;top:117.76px;width:200.6px;height:7.68px;line-height:7.68px;font-size:5.41px;color:#000;-webkit-text-stroke:0.3px #000;">استفاده تغییرات دشمن استکباری از ابوسفیان خاص گفته جای تلویزیون ذهن هواپیما بر کتاب اینترنت های کنند تلفن حرکت حرکت گروه گسترده در دشمن همراه</div>
<div class="a tj" style="left:16px;top:126.56px;width:200.6px;height:7.68px;line-height:7.68px;font-size:5.41px;color:#000;-webkit-text-stroke:0.3px #000;">بهره آتش یا قدرت از را دشمن حرکت جامعه می تفکر ماهواره روزنامه از توپ شود های این تلفن های نرم توپ اندیشه رسول نظامی</div>
<div class="a tj" style="left:16px;top:135.56px;width:200.6px;height:7.68px;line-height:7.68px;font-size:5.41px;color:#000;-webkit-text-stroke:0.3px #000;">اجتماعی یک می قدرت انجام آن گروه یعنی تغییر حرکت یابند بهره رسانه بهره اینترنت یا حرکت بر گفته جهت دهند روزنامه رسول جهت هواپیما</div>
<div class="a tj" style="left:116px;top:144.56px;width:100px;height:7.68px;line-height:7.68px;font-size:5.41px;color:#000;-webkit-text-stroke:0.3px #000;">نرم کتاب این خدا جامعه فعالیت همراه شبکه همراه مردم گروه جزوه جای روزنامه و</div>
<div class="a" style="left:214px;top:150px;width:14px;height:14px;border-radius:50%;background:#1a6ccc"></div></div>
<div class="a num" style="left:786px;top:418px">8</div>
<svg class="a" style="left:591px;top:421px" width="13" height="10" viewBox="0 0 13 10"><path d="M0 1.8h3M0 4.6h2.6M0 7.4h2.6" stroke="#1e1e1e" stroke-width="1"/><path d="M7.30 0.80 L8.43 3.70 L11.76 3.85 L9.10 5.95 L10.04 9.15 L7.30 7.40 L4.56 9.15 L5.50 5.95 L2.84 3.85 L6.17 3.70z" fill="none" stroke="#1e1e1e" stroke-width="1" stroke-linejoin="round"/></svg>
<div class="a slide" id="s9" style="left:872px;top:229px"><div class="a" style="left:1px;top:0;width:2px;height:180px;background:#c2c5ec"></div><div class="a" style="left:230px;top:0;width:1px;height:180px;background:#bcc0e6"></div><div class="a" style="left:232px;top:0;width:8px;height:180px;background:#b3c5ec"></div><div class="a" style="left:233.5px;top:0;width:1.6px;height:180px;background:#1f6fd2"></div>
<svg class="a" style="left:0;top:0" width="240" height="180" viewBox="0 0 240 180">
<defs><clipPath id="s9c1"><rect x="43" y="21" width="67.7" height="36.5"/></clipPath><clipPath id="s9c2"><rect x="129" y="21" width="60" height="36.5"/></clipPath>
<filter id="bl9"><feGaussianBlur stdDeviation="0.6"/></filter></defs>
<rect x="40" y="17.8" width="73.7" height="42.9" fill="#000"/>
<g clip-path="url(#s9c1)" filter="url(#bl9)">
<rect x="43" y="21" width="67.7" height="36.5" fill="#e08a78"/>
<rect x="43" y="21" width="67.7" height="10" fill="#f0a8a0"/>
<ellipse cx="48.7" cy="33.2" rx="2.7" ry="1.4" fill="#f0c8c8" opacity="0.85"/><ellipse cx="100.4" cy="50.3" rx="2.2" ry="3.1" fill="#5a3028" opacity="0.85"/><ellipse cx="55.8" cy="53.2" rx="3.0" ry="1.5" fill="#5a3028" opacity="0.85"/><ellipse cx="69.3" cy="30.7" rx="3.1" ry="3.0" fill="#8a4a40" opacity="0.85"/><ellipse cx="73.5" cy="44.3" rx="1.8" ry="2.4" fill="#c05040" opacity="0.85"/><ellipse cx="68.6" cy="57.4" rx="2.6" ry="2.9" fill="#2a1a1a" opacity="0.85"/><ellipse cx="72.4" cy="38.2" rx="2.0" ry="1.9" fill="#2a1a1a" opacity="0.85"/><ellipse cx="99.3" cy="34.4" rx="1.7" ry="1.1" fill="#3a2626" opacity="0.85"/><ellipse cx="104.1" cy="40.8" rx="2.3" ry="1.2" fill="#2a1a1a" opacity="0.85"/><ellipse cx="72.6" cy="47.0" rx="3.1" ry="2.3" fill="#c05040" opacity="0.85"/><ellipse cx="95.4" cy="46.1" rx="2.4" ry="3.2" fill="#8a4a40" opacity="0.85"/><ellipse cx="108.6" cy="41.5" rx="2.4" ry="3.5" fill="#5a3028" opacity="0.85"/><ellipse cx="88.3" cy="41.3" rx="1.9" ry="2.6" fill="#5a3028" opacity="0.85"/><ellipse cx="93.5" cy="49.8" rx="2.3" ry="1.8" fill="#2a1a1a" opacity="0.85"/><ellipse cx="82.5" cy="44.5" rx="2.5" ry="2.0" fill="#3a2626" opacity="0.85"/><ellipse cx="99.1" cy="37.8" rx="2.3" ry="1.0" fill="#8a4a40" opacity="0.85"/><ellipse cx="83.5" cy="28.2" rx="2.6" ry="1.8" fill="#c05040" opacity="0.85"/><ellipse cx="68.4" cy="40.2" rx="2.6" ry="2.9" fill="#5a3028" opacity="0.85"/><ellipse cx="81.7" cy="40.7" rx="3.5" ry="1.5" fill="#8a4a40" opacity="0.85"/><ellipse cx="62.4" cy="43.8" rx="1.8" ry="3.0" fill="#5a3028" opacity="0.85"/><ellipse cx="46.6" cy="31.6" rx="2.5" ry="2.6" fill="#5a3028" opacity="0.85"/><ellipse cx="98.1" cy="41.6" rx="1.8" ry="2.2" fill="#c05040" opacity="0.85"/><ellipse cx="75.9" cy="43.8" rx="1.5" ry="1.6" fill="#c05040" opacity="0.85"/><ellipse cx="83.8" cy="33.5" rx="2.8" ry="2.7" fill="#8a4a40" opacity="0.85"/><ellipse cx="108.2" cy="30.2" rx="1.4" ry="3.4" fill="#2a1a1a" opacity="0.85"/><ellipse cx="71.6" cy="38.4" rx="1.8" ry="2.4" fill="#3a2626" opacity="0.85"/><ellipse cx="60.8" cy="37.2" rx="1.6" ry="2.9" fill="#3a2626" opacity="0.85"/><ellipse cx="81.1" cy="34.5" rx="1.4" ry="3.2" fill="#3a2626" opacity="0.85"/><ellipse cx="53.6" cy="52.7" rx="3.1" ry="2.6" fill="#2a1a1a" opacity="0.85"/><ellipse cx="109.7" cy="44.1" rx="2.3" ry="1.3" fill="#c05040" opacity="0.85"/><ellipse cx="62.0" cy="46.3" rx="2.2" ry="3.4" fill="#c05040" opacity="0.85"/><ellipse cx="67.1" cy="37.7" rx="2.7" ry="1.1" fill="#2a1a1a" opacity="0.85"/><ellipse cx="99.5" cy="34.0" rx="3.3" ry="1.2" fill="#5a3028" opacity="0.85"/><ellipse cx="55.7" cy="54.3" rx="2.8" ry="2.0" fill="#8a4a40" opacity="0.85"/><ellipse cx="57.5" cy="39.1" rx="2.3" ry="1.8" fill="#c05040" opacity="0.85"/><ellipse cx="99.5" cy="48.5" rx="1.8" ry="3.2" fill="#2a1a1a" opacity="0.85"/><ellipse cx="84.6" cy="43.6" rx="2.8" ry="2.4" fill="#c05040" opacity="0.85"/><ellipse cx="107.4" cy="36.0" rx="1.5" ry="2.3" fill="#8a4a40" opacity="0.85"/><ellipse cx="96.6" cy="43.9" rx="1.4" ry="2.5" fill="#5a3028" opacity="0.85"/><ellipse cx="92.1" cy="51.3" rx="2.1" ry="3.3" fill="#c05040" opacity="0.85"/><ellipse cx="83.2" cy="47.1" rx="1.1" ry="3.2" fill="#2a1a1a" opacity="0.85"/><ellipse cx="68.0" cy="34.4" rx="1.2" ry="3.1" fill="#8a4a40" opacity="0.85"/><ellipse cx="99.4" cy="34.5" rx="2.9" ry="1.4" fill="#3a2626" opacity="0.85"/><ellipse cx="74.2" cy="42.3" rx="3.2" ry="1.2" fill="#c05040" opacity="0.85"/><ellipse cx="59.8" cy="39.6" rx="2.4" ry="2.2" fill="#f0c8c8" opacity="0.85"/><ellipse cx="90.0" cy="31.7" rx="2.8" ry="2.3" fill="#f0c8c8" opacity="0.85"/><ellipse cx="48.1" cy="54.8" rx="1.2" ry="2.5" fill="#c05040" opacity="0.85"/><ellipse cx="82.5" cy="45.6" rx="2.3" ry="2.1" fill="#c05040" opacity="0.85"/><ellipse cx="87.6" cy="42.3" rx="2.9" ry="3.2" fill="#3a2626" opacity="0.85"/><ellipse cx="68.4" cy="48.4" rx="1.5" ry="2.3" fill="#c05040" opacity="0.85"/><ellipse cx="82.1" cy="36.6" rx="3.2" ry="1.2" fill="#3a2626" opacity="0.85"/><ellipse cx="74.2" cy="41.9" rx="1.9" ry="2.7" fill="#f0c8c8" opacity="0.85"/><ellipse cx="91.8" cy="53.8" rx="2.8" ry="3.2" fill="#f0c8c8" opacity="0.85"/><ellipse cx="92.1" cy="57.1" rx="1.3" ry="2.4" fill="#8a4a40" opacity="0.85"/><ellipse cx="45.5" cy="44.2" rx="1.6" ry="2.5" fill="#2a1a1a" opacity="0.85"/><ellipse cx="91.6" cy="29.2" rx="1.1" ry="2.0" fill="#2a1a1a" opacity="0.85"/><ellipse cx="69.4" cy="34.9" rx="3.3" ry="2.4" fill="#2a1a1a" opacity="0.85"/><ellipse cx="59.6" cy="39.3" rx="1.3" ry="2.8" fill="#2a1a1a" opacity="0.85"/><ellipse cx="98.0" cy="35.6" rx="3.4" ry="2.1" fill="#2a1a1a" opacity="0.85"/><ellipse cx="55.0" cy="55.1" rx="2.0" ry="3.2" fill="#2a1a1a" opacity="0.85"/><ellipse cx="53.4" cy="54.4" rx="1.3" ry="1.8" fill="#8a4a40" opacity="0.85"/><ellipse cx="48.3" cy="45.5" rx="3.2" ry="2.1" fill="#2a1a1a" opacity="0.85"/><ellipse cx="57.0" cy="56.2" rx="3.1" ry="2.0" fill="#f0c8c8" opacity="0.85"/><ellipse cx="82.5" cy="34.5" rx="2.3" ry="2.6" fill="#5a3028" opacity="0.85"/><ellipse cx="93.9" cy="48.1" rx="1.4" ry="3.1" fill="#5a3028" opacity="0.85"/><ellipse cx="71.6" cy="55.0" rx="3.0" ry="3.2" fill="#8a4a40" opacity="0.85"/><ellipse cx="45.9" cy="53.5" rx="2.6" ry="2.4" fill="#8a4a40" opacity="0.85"/><ellipse cx="65.8" cy="42.5" rx="1.2" ry="3.1" fill="#8a4a40" opacity="0.85"/><ellipse cx="100.8" cy="43.8" rx="3.4" ry="2.0" fill="#8a4a40" opacity="0.85"/><ellipse cx="57.3" cy="41.4" rx="2.6" ry="2.5" fill="#5a3028" opacity="0.85"/>
<path d="M88 52 l4 -16 6 -4 5 6 4 14z" fill="#2a1c1c"/>
<path d="M45 56 h62" stroke="#4a2828" stroke-width="2.5"/>
</g>
<rect x="126" y="17.8" width="66" height="42.9" fill="#000"/>
<g clip-path="url(#s9c2)" filter="url(#bl9)">
<rect x="129" y="21" width="60" height="36.5" fill="#b08030"/>
<ellipse cx="154.3" cy="41.9" rx="2.4" ry="2.5" fill="#d0a040" opacity="0.85"/><ellipse cx="177.2" cy="53.5" rx="2.9" ry="1.2" fill="#a06020" opacity="0.85"/><ellipse cx="157.3" cy="52.0" rx="3.5" ry="2.4" fill="#7a5a30" opacity="0.85"/><ellipse cx="149.3" cy="22.6" rx="1.1" ry="3.2" fill="#d0a040" opacity="0.85"/><ellipse cx="138.9" cy="42.5" rx="2.5" ry="1.4" fill="#f0e0b0" opacity="0.85"/><ellipse cx="158.0" cy="46.0" rx="1.4" ry="1.3" fill="#d0a040" opacity="0.85"/><ellipse cx="186.1" cy="50.3" rx="1.2" ry="1.9" fill="#e8c050" opacity="0.85"/><ellipse cx="145.4" cy="27.1" rx="1.4" ry="2.5" fill="#5a3a10" opacity="0.85"/><ellipse cx="181.4" cy="26.2" rx="3.0" ry="1.9" fill="#d0a040" opacity="0.85"/><ellipse cx="146.2" cy="31.6" rx="3.5" ry="3.3" fill="#d0a040" opacity="0.85"/><ellipse cx="182.3" cy="42.1" rx="1.1" ry="1.9" fill="#a06020" opacity="0.85"/><ellipse cx="165.1" cy="32.4" rx="2.8" ry="1.2" fill="#d0a040" opacity="0.85"/><ellipse cx="172.0" cy="52.0" rx="2.2" ry="1.7" fill="#2a1a08" opacity="0.85"/><ellipse cx="182.0" cy="48.8" rx="1.5" ry="2.4" fill="#d0a040" opacity="0.85"/><ellipse cx="158.2" cy="28.9" rx="3.4" ry="1.0" fill="#e8c050" opacity="0.85"/><ellipse cx="137.3" cy="41.3" rx="1.9" ry="2.2" fill="#e8c050" opacity="0.85"/><ellipse cx="177.7" cy="53.6" rx="3.4" ry="3.2" fill="#a06020" opacity="0.85"/><ellipse cx="149.1" cy="41.0" rx="1.3" ry="2.7" fill="#e8c050" opacity="0.85"/><ellipse cx="153.5" cy="50.2" rx="1.5" ry="3.1" fill="#5a3a10" opacity="0.85"/><ellipse cx="150.9" cy="36.4" rx="3.4" ry="1.4" fill="#5a3a10" opacity="0.85"/><ellipse cx="177.2" cy="57.7" rx="2.0" ry="3.3" fill="#a06020" opacity="0.85"/><ellipse cx="152.5" cy="41.0" rx="2.5" ry="1.2" fill="#a06020" opacity="0.85"/><ellipse cx="167.2" cy="27.9" rx="2.5" ry="2.9" fill="#d0a040" opacity="0.85"/><ellipse cx="152.9" cy="50.1" rx="2.6" ry="2.0" fill="#5a3a10" opacity="0.85"/><ellipse cx="181.1" cy="51.0" rx="3.0" ry="2.4" fill="#2a1a08" opacity="0.85"/><ellipse cx="168.7" cy="43.1" rx="3.3" ry="3.0" fill="#f0e0b0" opacity="0.85"/><ellipse cx="173.9" cy="33.5" rx="1.4" ry="2.0" fill="#2a1a08" opacity="0.85"/><ellipse cx="177.7" cy="25.3" rx="2.3" ry="1.8" fill="#a06020" opacity="0.85"/><ellipse cx="159.6" cy="21.4" rx="3.0" ry="1.9" fill="#7a5a30" opacity="0.85"/><ellipse cx="182.0" cy="32.6" rx="2.7" ry="3.0" fill="#a06020" opacity="0.85"/><ellipse cx="181.9" cy="28.1" rx="1.0" ry="3.4" fill="#5a3a10" opacity="0.85"/><ellipse cx="166.3" cy="56.2" rx="2.1" ry="1.8" fill="#f0e0b0" opacity="0.85"/><ellipse cx="156.9" cy="50.2" rx="2.1" ry="2.1" fill="#e8c050" opacity="0.85"/><ellipse cx="130.6" cy="57.1" rx="1.2" ry="1.3" fill="#d0a040" opacity="0.85"/><ellipse cx="157.3" cy="33.0" rx="2.2" ry="1.6" fill="#7a5a30" opacity="0.85"/><ellipse cx="141.7" cy="39.0" rx="3.1" ry="2.1" fill="#e8c050" opacity="0.85"/><ellipse cx="163.0" cy="24.0" rx="1.6" ry="1.1" fill="#f0e0b0" opacity="0.85"/><ellipse cx="131.0" cy="43.3" rx="1.6" ry="1.2" fill="#d0a040" opacity="0.85"/><ellipse cx="158.5" cy="24.5" rx="1.9" ry="3.0" fill="#5a3a10" opacity="0.85"/><ellipse cx="173.0" cy="54.7" rx="3.2" ry="1.5" fill="#2a1a08" opacity="0.85"/><ellipse cx="144.6" cy="22.4" rx="2.9" ry="2.8" fill="#e8c050" opacity="0.85"/><ellipse cx="147.3" cy="32.0" rx="2.4" ry="1.2" fill="#f0e0b0" opacity="0.85"/><ellipse cx="129.5" cy="39.9" rx="2.2" ry="1.5" fill="#f0e0b0" opacity="0.85"/><ellipse cx="168.3" cy="53.5" rx="2.4" ry="3.1" fill="#2a1a08" opacity="0.85"/><ellipse cx="165.1" cy="35.8" rx="2.6" ry="2.4" fill="#7a5a30" opacity="0.85"/><ellipse cx="165.6" cy="45.6" rx="2.1" ry="2.5" fill="#a06020" opacity="0.85"/><ellipse cx="170.2" cy="29.4" rx="1.4" ry="2.8" fill="#f0e0b0" opacity="0.85"/><ellipse cx="178.3" cy="51.7" rx="1.1" ry="2.6" fill="#2a1a08" opacity="0.85"/><ellipse cx="162.1" cy="22.4" rx="1.9" ry="3.1" fill="#5a3a10" opacity="0.85"/><ellipse cx="166.6" cy="57.4" rx="3.3" ry="1.8" fill="#e8c050" opacity="0.85"/><ellipse cx="183.7" cy="56.1" rx="2.8" ry="2.0" fill="#f0e0b0" opacity="0.85"/><ellipse cx="153.1" cy="52.9" rx="2.0" ry="1.4" fill="#5a3a10" opacity="0.85"/><ellipse cx="143.7" cy="52.1" rx="3.0" ry="2.5" fill="#a06020" opacity="0.85"/><ellipse cx="187.6" cy="34.6" rx="2.3" ry="3.3" fill="#5a3a10" opacity="0.85"/><ellipse cx="150.9" cy="21.3" rx="2.4" ry="2.8" fill="#d0a040" opacity="0.85"/><ellipse cx="137.5" cy="30.4" rx="2.3" ry="3.2" fill="#e8c050" opacity="0.85"/><ellipse cx="162.9" cy="39.0" rx="3.0" ry="3.2" fill="#2a1a08" opacity="0.85"/><ellipse cx="183.5" cy="44.1" rx="1.9" ry="2.1" fill="#d0a040" opacity="0.85"/><ellipse cx="184.9" cy="37.8" rx="3.0" ry="1.3" fill="#2a1a08" opacity="0.85"/><ellipse cx="169.8" cy="42.9" rx="2.0" ry="1.0" fill="#d0a040" opacity="0.85"/><ellipse cx="163.0" cy="46.7" rx="2.1" ry="1.2" fill="#f0e0b0" opacity="0.85"/><ellipse cx="182.6" cy="21.8" rx="2.0" ry="1.3" fill="#7a5a30" opacity="0.85"/><ellipse cx="174.2" cy="27.3" rx="1.7" ry="2.6" fill="#5a3a10" opacity="0.85"/><ellipse cx="179.0" cy="45.5" rx="3.2" ry="1.9" fill="#2a1a08" opacity="0.85"/><ellipse cx="158.6" cy="40.6" rx="3.2" ry="2.9" fill="#2a1a08" opacity="0.85"/><ellipse cx="133.5" cy="22.1" rx="2.2" ry="3.3" fill="#2a1a08" opacity="0.85"/><ellipse cx="130.8" cy="34.6" rx="1.9" ry="2.4" fill="#f0e0b0" opacity="0.85"/><ellipse cx="132.6" cy="35.3" rx="1.0" ry="3.5" fill="#e8c050" opacity="0.85"/><ellipse cx="181.2" cy="33.1" rx="1.9" ry="1.4" fill="#f0e0b0" opacity="0.85"/><ellipse cx="177.4" cy="52.1" rx="2.7" ry="2.4" fill="#7a5a30" opacity="0.85"/><ellipse cx="142.0" cy="37.9" rx="3.5" ry="1.6" fill="#5a3a10" opacity="0.85"/><ellipse cx="131.1" cy="53.1" rx="2.0" ry="1.4" fill="#7a5a30" opacity="0.85"/><ellipse cx="159.1" cy="27.5" rx="3.1" ry="2.1" fill="#f0e0b0" opacity="0.85"/><ellipse cx="174.9" cy="53.7" rx="2.8" ry="3.2" fill="#d0a040" opacity="0.85"/><ellipse cx="148.4" cy="38.9" rx="1.5" ry="2.0" fill="#7a5a30" opacity="0.85"/><ellipse cx="177.8" cy="28.4" rx="2.7" ry="2.9" fill="#d0a040" opacity="0.85"/><ellipse cx="162.1" cy="41.9" rx="3.0" ry="1.3" fill="#e8c050" opacity="0.85"/><ellipse cx="129.7" cy="32.0" rx="1.2" ry="1.7" fill="#2a1a08" opacity="0.85"/><ellipse cx="183.2" cy="25.3" rx="1.1" ry="2.2" fill="#f0e0b0" opacity="0.85"/><ellipse cx="153.8" cy="26.0" rx="1.4" ry="2.3" fill="#a06020" opacity="0.85"/>
<circle cx="157" cy="27" r="4.5" fill="#fff8e0" opacity="0.9"/>
</g>
</svg>
<div class="a tj" style="left:18px;top:63.66px;width:187px;height:7.68px;line-height:7.68px;font-size:5.41px;color:#000;-webkit-text-stroke:0.3px #000;">تغییر استفاده شب فیلم جامعه فراوان یعنی مردم کنند تسلط جهت جای گفته شبکه تلفن قدرت بهره تلویزیون تانک فعالیت جامعه غیرنظامی اینترنت</div>
<div class="a tj" style="left:18px;top:72.16px;width:187px;height:7.68px;line-height:7.68px;font-size:5.41px;color:#000;-webkit-text-stroke:0.3px #000;">ماهواره تفکر بلندی را به آن اجتماعی مردم نوع بهره گفته تغییرات یابند خاص خاص فکر فراوان تغییرات گسترده روز قدرت گیرند در</div>
<div class="a tj" style="left:18px;top:80.86px;width:187px;height:7.68px;line-height:7.68px;font-size:5.41px;color:#000;-webkit-text-stroke:0.3px #000;">حرکت که به جامعه جنگ خدا غیرنظامی قدرت ای توپ جامعه کنند شود مردم ابوسفیان تلویزیون روز لازم ایجاد آن توپ مردم بالای</div>
<div class="a tj" style="left:18px;top:89.46px;width:187px;height:7.68px;line-height:7.68px;font-size:5.41px;color:#000;-webkit-text-stroke:0.3px #000;">بر شبکه این یابند اطراف به کلیهٔ سپاهیان توپ گیرند استفاده هواپیما قدرت گفته تفکر مردم نرم حرکت گفته های همراه ماهواره های</div>
<div class="a tj" style="left:18px;top:98.06px;width:187px;height:7.68px;line-height:7.68px;font-size:5.41px;color:#000;-webkit-text-stroke:0.3px #000;">تانک و فعالیت بر تغییر سرمایه قدرت ماهواره در شود جنگ نظامی اینترنت کتاب جنگ تغییر غیرنظامی روز روزنامه ای ماهواره فیلم فراوان</div>
<div class="a tj" style="left:18px;top:106.66px;width:187px;height:7.68px;line-height:7.68px;font-size:5.41px;color:#000;-webkit-text-stroke:0.3px #000;">اجتماعی جامعه به تفنگ یعنی عوامل گروه تغییر جامعه تانک بر جنگ نوع یابند این تفنگ تغییرات روشن تغییر آتش تا یابند را</div>
<div class="a tj" style="left:18px;top:115.66px;width:187px;height:7.68px;line-height:7.68px;font-size:5.41px;color:#000;-webkit-text-stroke:0.3px #000;">ماهواره نظامی و اطراف گروهی اجتماعی دشمن تسلط های اطراف گروهی ماهواره دشمن ماهواره و تا اجتماعی بهره ای هواپیما لازم در می</div>
<div class="a tj" style="left:18px;top:124.16px;width:187px;height:7.68px;line-height:7.68px;font-size:5.41px;color:#000;-webkit-text-stroke:0.3px #000;">رسانه بر تا های مردم نوع غیرنظامی تانک نظامی گسترده جزوه کتاب رسانه رادیو می تغییرات به در استفاده در مجله ماهواره یک</div>
<div class="a tj" style="left:18px;top:132.76px;width:187px;height:7.68px;line-height:7.68px;font-size:5.41px;color:#000;-webkit-text-stroke:0.3px #000;">رسول گروه جزوه عکس تانک تلویزیون جهت دشمن ماهواره تفکر جامعه کتاب اسلام بهره بر موشک فیلم تفکر های کنند همراه گفته کنند</div>
<div class="a tj" style="left:98.7px;top:142.66px;width:106.3px;height:7.68px;line-height:7.68px;font-size:5.41px;color:#000;-webkit-text-stroke:0.3px #000;">تلفن که جزوه غیرنظامی نوع عوامل و شود بر عوامل مکه روزنامه فیلم جای رسانه آتش</div>
<div class="a" style="left:214px;top:150px;width:14px;height:14px;border-radius:50%;background:#1a6ccc"></div></div>
<div class="a num" style="left:1066px;top:418px">9</div>
<svg class="a" style="left:871px;top:421px" width="13" height="10" viewBox="0 0 13 10"><path d="M0 1.8h3M0 4.6h2.6M0 7.4h2.6" stroke="#1e1e1e" stroke-width="1"/><path d="M7.30 0.80 L8.43 3.70 L11.76 3.85 L9.10 5.95 L10.04 9.15 L7.30 7.40 L4.56 9.15 L5.50 5.95 L2.84 3.85 L6.17 3.70z" fill="none" stroke="#1e1e1e" stroke-width="1" stroke-linejoin="round"/></svg>
<div class="a slide" id="s10" style="left:1152px;top:229px"><div class="a" style="left:1px;top:0;width:2px;height:180px;background:#c2c5ec"></div><div class="a" style="left:230px;top:0;width:1px;height:180px;background:#bcc0e6"></div><div class="a" style="left:232px;top:0;width:8px;height:180px;background:#b3c5ec"></div><div class="a" style="left:233.5px;top:0;width:1.6px;height:180px;background:#1f6fd2"></div>
<div class="a tj" style="left:24.7px;top:16.56px;width:181.3px;height:7.68px;line-height:7.68px;font-size:5.41px;color:#000;-webkit-text-stroke:0.3px #000;">که این ای فناوری هواپیما استفاده توپ به گسترده اطراف ابوسفیان عوامل های جنگ تغییرات تفکر ای نوع شبکه شود تلویزیون تغییر جامعه</div>
<div class="a tj" style="left:24.7px;top:25.16px;width:181.3px;height:7.68px;line-height:7.68px;font-size:5.41px;color:#000;-webkit-text-stroke:0.3px #000;">تغییر تا کلیهٔ توپ فناوری خاص مکه نرم موشک هواپیما گیرند فیلم اطراف در ذهن جامعه اجتماعی انجام گفته همراه عوامل های غیرنظامی</div>
<div class="a tj" style="left:24.7px;top:34.36px;width:181.3px;height:7.68px;line-height:7.68px;font-size:5.41px;color:#000;-webkit-text-stroke:0.3px #000;">اندیشه حرکت اسلام موشک انجام اینترنت تغییرات آن این روشن در گروه ایجاد ماهواره تغییر ماهواره بهره دهند جنگ یا ماهواره گیرند روشن</div>
<div class="a tj" style="left:77px;top:42.16px;width:129px;height:7.68px;line-height:7.68px;font-size:5.41px;color:#000;-webkit-text-stroke:0.3px #000;">سرمایه نرم سپاهیان نظامی یک تفنگ تفنگ استفاده خدا جای کتاب شود این جامعه رادیو گفته تا گفته</div>
<svg class="a" style="left:0;top:0" width="240" height="180" viewBox="0 0 240 180">
<defs><clipPath id="s10c"><rect x="79" y="62" width="82" height="46" rx="3"/></clipPath><filter id="bl10"><feGaussianBlur stdDeviation="0.8"/></filter>
<linearGradient id="s10r" x1="0" y1="0" x2="0" y2="1"><stop offset="0" stop-color="#c8c0b8" stop-opacity="0.5"/><stop offset="1" stop-color="#fff" stop-opacity="0"/></linearGradient></defs>
<g clip-path="url(#s10c)"><g filter="url(#bl10)">
<rect x="70" y="55" width="100" height="60" fill="#86b4e4"/>
<ellipse cx="128" cy="68" rx="32" ry="11" fill="#3a3028"/><ellipse cx="150" cy="78" rx="12" ry="10" fill="#4a3c30"/>
<ellipse cx="104" cy="82" rx="12" ry="13" fill="#dcd8d4"/><ellipse cx="135" cy="87" rx="14" ry="8" fill="#c8c4c0"/>
<ellipse cx="131.0" cy="66.6" rx="4.9" ry="4.8" fill="#b8b2ac" opacity="0.6"/><ellipse cx="98.0" cy="77.1" rx="3.8" ry="4.8" fill="#b8b2ac" opacity="0.6"/><ellipse cx="137.9" cy="67.2" rx="4.9" ry="2.2" fill="#5a4a3c" opacity="0.6"/><ellipse cx="105.0" cy="75.1" rx="3.6" ry="2.6" fill="#8a7a6a" opacity="0.6"/><ellipse cx="115.2" cy="81.7" rx="3.2" ry="2.6" fill="#b8b2ac" opacity="0.6"/><ellipse cx="124.0" cy="67.2" rx="4.0" ry="3.9" fill="#d8d4d0" opacity="0.6"/><ellipse cx="136.2" cy="90.0" rx="3.2" ry="3.1" fill="#b8b2ac" opacity="0.6"/><ellipse cx="99.8" cy="85.3" rx="3.3" ry="4.6" fill="#5a4a3c" opacity="0.6"/><ellipse cx="128.2" cy="71.7" rx="2.1" ry="4.1" fill="#3a3028" opacity="0.6"/><ellipse cx="111.2" cy="87.9" rx="5.0" ry="3.3" fill="#d8d4d0" opacity="0.6"/><ellipse cx="99.1" cy="65.1" rx="4.1" ry="4.2" fill="#d8d4d0" opacity="0.6"/><ellipse cx="150.6" cy="79.3" rx="2.5" ry="4.5" fill="#e8e4e0" opacity="0.6"/><ellipse cx="114.3" cy="89.6" rx="4.1" ry="4.1" fill="#3a3028" opacity="0.6"/><ellipse cx="154.1" cy="62.2" rx="3.7" ry="3.6" fill="#2a221c" opacity="0.6"/><ellipse cx="149.3" cy="88.5" rx="2.4" ry="4.1" fill="#8a7a6a" opacity="0.6"/><ellipse cx="132.5" cy="75.7" rx="3.9" ry="4.1" fill="#8a7a6a" opacity="0.6"/><ellipse cx="107.5" cy="91.7" rx="3.6" ry="4.9" fill="#5a4a3c" opacity="0.6"/><ellipse cx="100.0" cy="65.1" rx="2.9" ry="3.1" fill="#3a3028" opacity="0.6"/><ellipse cx="129.0" cy="83.4" rx="3.1" ry="2.2" fill="#d8d4d0" opacity="0.6"/><ellipse cx="137.1" cy="71.1" rx="2.8" ry="2.5" fill="#b8b2ac" opacity="0.6"/><ellipse cx="107.7" cy="63.8" rx="4.9" ry="4.7" fill="#d8d4d0" opacity="0.6"/><ellipse cx="110.1" cy="69.5" rx="4.9" ry="2.5" fill="#3a3028" opacity="0.6"/><ellipse cx="134.2" cy="89.1" rx="3.4" ry="3.7" fill="#8a7a6a" opacity="0.6"/><ellipse cx="115.9" cy="86.9" rx="3.4" ry="2.6" fill="#e8e4e0" opacity="0.6"/><ellipse cx="128.2" cy="71.4" rx="4.8" ry="2.9" fill="#2a221c" opacity="0.6"/><ellipse cx="117.6" cy="73.7" rx="3.9" ry="4.2" fill="#e8e4e0" opacity="0.6"/><ellipse cx="99.1" cy="65.0" rx="2.4" ry="3.0" fill="#d8d4d0" opacity="0.6"/><ellipse cx="96.5" cy="89.2" rx="2.6" ry="4.0" fill="#8a7a6a" opacity="0.6"/><ellipse cx="117.6" cy="82.5" rx="3.6" ry="2.4" fill="#e8e4e0" opacity="0.6"/><ellipse cx="129.5" cy="70.2" rx="2.9" ry="2.8" fill="#b8b2ac" opacity="0.6"/><ellipse cx="107.6" cy="93.1" rx="4.3" ry="2.7" fill="#e8e4e0" opacity="0.6"/><ellipse cx="156.6" cy="85.2" rx="3.3" ry="4.0" fill="#d8d4d0" opacity="0.6"/><ellipse cx="129.3" cy="67.0" rx="2.1" ry="4.7" fill="#e8e4e0" opacity="0.6"/><ellipse cx="152.2" cy="62.0" rx="3.2" ry="3.4" fill="#d8d4d0" opacity="0.6"/><ellipse cx="142.7" cy="92.4" rx="3.5" ry="4.4" fill="#2a221c" opacity="0.6"/><ellipse cx="98.8" cy="83.5" rx="2.8" ry="3.9" fill="#2a221c" opacity="0.6"/><ellipse cx="100.3" cy="81.2" rx="3.3" ry="3.6" fill="#3a3028" opacity="0.6"/><ellipse cx="104.1" cy="84.3" rx="3.3" ry="2.8" fill="#5a4a3c" opacity="0.6"/><ellipse cx="117.1" cy="81.9" rx="3.6" ry="4.9" fill="#2a221c" opacity="0.6"/><ellipse cx="106.9" cy="65.4" rx="4.2" ry="3.8" fill="#2a221c" opacity="0.6"/><ellipse cx="140.8" cy="66.5" rx="2.4" ry="5.0" fill="#e8e4e0" opacity="0.6"/><ellipse cx="153.4" cy="87.0" rx="4.1" ry="4.6" fill="#3a3028" opacity="0.6"/><ellipse cx="131.7" cy="91.8" rx="3.0" ry="4.8" fill="#5a4a3c" opacity="0.6"/><ellipse cx="130.8" cy="76.4" rx="2.4" ry="2.3" fill="#3a3028" opacity="0.6"/><ellipse cx="122.8" cy="79.4" rx="4.6" ry="3.8" fill="#3a3028" opacity="0.6"/><ellipse cx="156.6" cy="73.7" rx="2.4" ry="2.2" fill="#d8d4d0" opacity="0.6"/><ellipse cx="137.4" cy="62.1" rx="2.3" ry="2.9" fill="#5a4a3c" opacity="0.6"/><ellipse cx="139.8" cy="73.2" rx="3.7" ry="2.5" fill="#8a7a6a" opacity="0.6"/><ellipse cx="149.4" cy="84.1" rx="4.1" ry="3.9" fill="#2a221c" opacity="0.6"/><ellipse cx="97.0" cy="70.4" rx="4.7" ry="3.4" fill="#5a4a3c" opacity="0.6"/>
<rect x="70" y="91" width="100" height="5" fill="#e8e0d4"/>
<ellipse cx="91.2" cy="92.9" rx="1.3" ry="2.4" fill="#c8c0b0" opacity="0.9"/><ellipse cx="110.5" cy="92.9" rx="2.1" ry="1.1" fill="#c8c0b0" opacity="0.9"/><ellipse cx="139.3" cy="91.0" rx="1.5" ry="1.3" fill="#f0ece8" opacity="0.9"/><ellipse cx="135.6" cy="92.9" rx="1.9" ry="2.0" fill="#c8c0b0" opacity="0.9"/><ellipse cx="137.6" cy="92.2" rx="2.0" ry="1.8" fill="#e0d8cc" opacity="0.9"/><ellipse cx="134.0" cy="90.0" rx="1.2" ry="1.7" fill="#c8c0b0" opacity="0.9"/><ellipse cx="120.8" cy="94.0" rx="1.9" ry="1.8" fill="#c8c0b0" opacity="0.9"/><ellipse cx="108.8" cy="88.6" rx="1.5" ry="1.6" fill="#c8c0b0" opacity="0.9"/><ellipse cx="124.8" cy="91.5" rx="2.3" ry="2.8" fill="#6a5040" opacity="0.9"/><ellipse cx="131.4" cy="91.8" rx="2.9" ry="1.9" fill="#c8c0b0" opacity="0.9"/><ellipse cx="111.0" cy="93.9" rx="2.2" ry="2.8" fill="#c8c0b0" opacity="0.9"/><ellipse cx="122.8" cy="95.8" rx="2.1" ry="1.8" fill="#e0d8cc" opacity="0.9"/><ellipse cx="156.4" cy="89.4" rx="1.1" ry="2.7" fill="#e0d8cc" opacity="0.9"/><ellipse cx="138.6" cy="91.3" rx="2.8" ry="1.3" fill="#6a5040" opacity="0.9"/><ellipse cx="115.7" cy="93.3" rx="1.4" ry="1.8" fill="#c8c0b0" opacity="0.9"/><ellipse cx="128.2" cy="92.3" rx="1.0" ry="1.5" fill="#6a5040" opacity="0.9"/><ellipse cx="91.3" cy="89.0" rx="1.3" ry="1.8" fill="#6a5040" opacity="0.9"/><ellipse cx="100.9" cy="91.6" rx="2.5" ry="1.9" fill="#6a5040" opacity="0.9"/><ellipse cx="147.3" cy="93.4" rx="1.0" ry="1.4" fill="#e0d8cc" opacity="0.9"/><ellipse cx="125.9" cy="89.7" rx="2.5" ry="1.5" fill="#c8c0b0" opacity="0.9"/><ellipse cx="152.3" cy="93.7" rx="2.3" ry="2.5" fill="#e0d8cc" opacity="0.9"/><ellipse cx="90.4" cy="90.0" rx="1.8" ry="1.4" fill="#e0d8cc" opacity="0.9"/><ellipse cx="136.6" cy="95.4" rx="2.4" ry="2.9" fill="#f0ece8" opacity="0.9"/><ellipse cx="117.9" cy="94.7" rx="1.5" ry="2.6" fill="#c8c0b0" opacity="0.9"/><ellipse cx="150.1" cy="88.5" rx="1.4" ry="2.9" fill="#c8c0b0" opacity="0.9"/><ellipse cx="90.1" cy="93.7" rx="1.8" ry="2.5" fill="#f0ece8" opacity="0.9"/><ellipse cx="157.3" cy="90.7" rx="1.3" ry="2.8" fill="#e0d8cc" opacity="0.9"/><ellipse cx="134.9" cy="94.3" rx="2.4" ry="1.5" fill="#6a5040" opacity="0.9"/><ellipse cx="152.8" cy="89.2" rx="3.0" ry="3.0" fill="#c8c0b0" opacity="0.9"/><ellipse cx="84.5" cy="94.1" rx="2.5" ry="2.9" fill="#f0ece8" opacity="0.9"/>
<rect x="70" y="97" width="100" height="18" fill="#c4a47c"/>
<path d="M148 96 L165 90 L165 115 L142 115z" fill="#242424"/>
<path d="M105 70 v26 M118 78 v18" stroke="#5a4a3a" stroke-width="1.6"/>
</g></g>
<rect x="79" y="108" width="82" height="10" fill="url(#s10r)"/>
</svg>
<div class="a tj" style="left:32px;top:127.16px;width:166.4px;height:7.68px;line-height:7.68px;font-size:5.41px;color:#000;-webkit-text-stroke:0.3px #000;">نرم خاص از بالای بر موشک عوامل اجتماعی شود گفته یعنی مردم جنگ های ایجاد های نوع غیرنظامی تغییرات به تفکر</div>
<div class="a tj" style="left:32px;top:136.66px;width:166.4px;height:7.68px;line-height:7.68px;font-size:5.41px;color:#000;-webkit-text-stroke:0.3px #000;">جنگ بهره کتاب که تفنگ جنگ یک دشمن بر اطراف بالای بر آن کتاب ذهن دهند بهره مکه این نظامی به</div>
<div class="a tj" style="left:50px;top:146.16px;width:148px;height:7.68px;line-height:7.68px;font-size:5.41px;color:#000;-webkit-text-stroke:0.3px #000;">تغییرات ابوسفیان اطراف ماهواره روشن مجله تسلط غیرنظامی کتاب روزنامه گروهی که گروه شود غیرنظامی اطراف های گروه کلیهٔ موشک</div>
<div class="a" style="left:214px;top:150px;width:14px;height:14px;border-radius:50%;background:#1a6ccc"></div></div>
<div class="a num" style="left:1346px;top:418px">10</div>
<svg class="a" style="left:1151px;top:421px" width="13" height="10" viewBox="0 0 13 10"><path d="M0 1.8h3M0 4.6h2.6M0 7.4h2.6" stroke="#1e1e1e" stroke-width="1"/><path d="M7.30 0.80 L8.43 3.70 L11.76 3.85 L9.10 5.95 L10.04 9.15 L7.30 7.40 L4.56 9.15 L5.50 5.95 L2.84 3.85 L6.17 3.70z" fill="none" stroke="#1e1e1e" stroke-width="1" stroke-linejoin="round"/></svg>
<div class="a slide" id="s11" style="left:32px;top:446px"><div class="a" style="left:1px;top:0;width:2px;height:180px;background:#c2c5ec"></div><div class="a" style="left:230px;top:0;width:1px;height:180px;background:#bcc0e6"></div><div class="a" style="left:232px;top:0;width:8px;height:180px;background:#b3c5ec"></div><div class="a" style="left:233.5px;top:0;width:1.6px;height:180px;background:#1f6fd2"></div>
<div class="a" style="left:36px;top:13.3px;width:158px;height:100.4px;background:#1fc98f"></div>
<div class="a" style="left:150px;top:13.79px;width:41.5px;height:8.41px;line-height:8.41px;direction:rtl;white-space:nowrap;overflow:visible;text-align:right;font-size:5.8px;color:#e8101a;font-weight:bold;">پیام‌تبریک</div>
<div class="a tj" style="left:38.6px;top:23.66px;width:152.4px;height:7.68px;line-height:7.68px;font-size:5.41px;color:#fff;-webkit-text-stroke:0.3px #fff;">همراه سرمایه کتاب تا روشن تانک آن گروه غیرنظامی تغییر حرکت اندیشه عوامل همراه ایجاد اجتماعی استکباری حرکت خاص ابوسفیان</div>
<div class="a tj" style="left:38.6px;top:32.16px;width:152.4px;height:7.68px;line-height:7.68px;font-size:5.41px;color:#fff;-webkit-text-stroke:0.3px #fff;">سپاهیان جهت های انجام اجتماعی روز جای همراه از نظامی تانک ماهواره دشمن تانک خدا عکس ماهواره ماهواره فعالیت فیلم</div>
<div class="a tj" style="left:38.6px;top:41.16px;width:152.4px;height:7.68px;line-height:7.68px;font-size:5.41px;color:#fff;-webkit-text-stroke:0.3px #fff;">قدرت جامعه اجتماعی تلفن گروه به تلویزیون انجام اینترنت لازم جهت تلفن شب فیلم گیرند انجام جامعه کلیهٔ دشمن حرکت</div>
<div class="a tj" style="left:38.6px;top:49.76px;width:152.4px;height:7.68px;line-height:7.68px;font-size:5.41px;color:#fff;-webkit-text-stroke:0.3px #fff;">گروهی قدرت اجتماعی جهت شب روشن کتاب یعنی می گروهی مجله از انجام فکر می عوامل تغییرات شبکه را جامعه</div>
<div class="a tj" style="left:38.6px;top:58.76px;width:152.4px;height:7.68px;line-height:7.68px;font-size:5.41px;color:#fff;-webkit-text-stroke:0.3px #fff;">توپ جامعه که اندیشه هواپیما دشمن مکه ابوسفیان شبکه جهت ای روشن فناوری انجام ابوسفیان یابند روشن تلفن آتش جامعه</div>
<div class="a tj" style="left:38.6px;top:67.56px;width:152.4px;height:7.68px;line-height:7.68px;font-size:5.41px;color:#fff;-webkit-text-stroke:0.3px #fff;">تفکر تا خدا تسلط که تلفن فکر انجام شبکه عکس یک خاص گفته گسترده بر که رسول سرمایه غیرنظامی نظامی</div>
<div class="a tj" style="left:38.6px;top:76.56px;width:152.4px;height:7.68px;line-height:7.68px;font-size:5.41px;color:#fff;-webkit-text-stroke:0.3px #fff;">موشک یک شبکه اطراف گیرند حرکت کنند تانک های ماهواره تانک بالای گفته اینترنت شبکه استکباری کتاب بهره یعنی رادیو</div>
<div class="a tj" style="left:153px;top:85.16px;width:38px;height:7.68px;line-height:7.68px;font-size:5.41px;color:#fff;-webkit-text-stroke:0.3px #fff;">دهند فعالیت به روشن را نوع نرم بهره روشن</div>
<div class="a" style="left:50px;top:93.76px;width:50px;height:7.68px;line-height:7.68px;direction:rtl;white-space:nowrap;overflow:visible;text-align:right;font-size:5.3px;color:#fff;font-weight:bold;-webkit-text-stroke:0.2px #fff">مقام معظم رهبری</div>
<div class="a" style="left:30px;top:102.16px;width:103px;height:7.68px;line-height:7.68px;direction:rtl;white-space:nowrap;overflow:visible;text-align:right;font-size:5.3px;color:#fff;font-weight:bold;-webkit-text-stroke:0.2px #fff">در حرم مطهر رضوی (ع) نوروز۱۳۸۷</div>
<div class="a" style="left:17px;top:133px;width:195px;height:36.4px;border:1px solid #111;border-radius:6px"></div>
<div class="a" style="left:150px;top:134.84px;width:59px;height:11.31px;line-height:11.31px;direction:rtl;white-space:nowrap;overflow:visible;text-align:right;font-size:7.8px;color:#1a9ad8;font-weight:bold;text-decoration:underline;-webkit-text-stroke:0.3px #1a9ad8">فعالیت (۲)</div>
<div class="a tj" style="left:24.7px;top:145.63px;width:183.3px;height:10.73px;line-height:10.73px;font-size:7.55px;color:#1a1a1a;-webkit-text-stroke:0.05px #1a1a1a;">نمونه هایی از جنگ روانی علیه جمهوری اسلامی ایران را در</div>
<div class="a" style="left:100px;top:156.56px;width:108px;height:10.88px;line-height:10.88px;direction:rtl;white-space:nowrap;overflow:visible;text-align:right;font-size:7.5px;color:#1a1a1a;font-weight:normal;">کلاس درس بررسی کنید.</div>
<div class="a" style="left:214px;top:150px;width:14px;height:14px;border-radius:50%;background:#1a6ccc"></div></div>
<div class="a num" style="left:226px;top:635px">11</div>
<svg class="a" style="left:31px;top:638px" width="13" height="10" viewBox="0 0 13 10"><path d="M0 1.8h3M0 4.6h2.6M0 7.4h2.6" stroke="#1e1e1e" stroke-width="1"/><path d="M7.30 0.80 L8.43 3.70 L11.76 3.85 L9.10 5.95 L10.04 9.15 L7.30 7.40 L4.56 9.15 L5.50 5.95 L2.84 3.85 L6.17 3.70z" fill="none" stroke="#1e1e1e" stroke-width="1" stroke-linejoin="round"/></svg>
<div class="a slide" id="s12" style="left:312px;top:446px"><div class="a" style="left:1px;top:0;width:2px;height:180px;background:#c2c5ec"></div><div class="a" style="left:230px;top:0;width:1px;height:180px;background:#bcc0e6"></div><div class="a" style="left:232px;top:0;width:8px;height:180px;background:#b3c5ec"></div><div class="a" style="left:233.5px;top:0;width:1.6px;height:180px;background:#1f6fd2"></div>
<div class="a tj" style="left:31px;top:23.66px;width:171.7px;height:7.68px;line-height:7.68px;font-size:5.41px;color:#000;-webkit-text-stroke:0.1px #000;">گیرند دهند تفکر تلفن تغییرات عوامل جامعه عکس تلویزیون فیلم جهت رادیو یعنی ذهن استکباری که که ابوسفیان جامعه در هواپیما گسترده</div>
<div class="a tj" style="left:31px;top:36.86px;width:171.7px;height:7.68px;line-height:7.68px;font-size:5.41px;color:#000;-webkit-text-stroke:0.1px #000;">ذهن در دشمن یعنی جزوه های یا های عوامل آتش فناوری لازم بر جامعه را از می فراوان گسترده یابند عوامل مجله</div>
<div class="a tj" style="left:31px;top:49.76px;width:171.7px;height:7.68px;line-height:7.68px;font-size:5.41px;color:#000;-webkit-text-stroke:0.1px #000;">آتش شود انجام موشک آتش استفاده گیرند گروهی شود یعنی اندیشه گروه بلندی این آتش یعنی نرم هواپیما کتاب غیرنظامی جامعه تا</div>
<div class="a tj" style="left:97.6px;top:63.76px;width:105.1px;height:7.68px;line-height:7.68px;font-size:5.41px;color:#000;-webkit-text-stroke:0.1px #000;">تلفن انجام ابوسفیان استفاده سرمایه موشک جزوه می این لازم مردم دشمن ابوسفیان فیلم بهره رسول</div>
<div class="a tj" style="left:31px;top:77.66px;width:175px;height:7.68px;line-height:7.68px;font-size:5.41px;color:#000;-webkit-text-stroke:0.1px #000;">فکر بالای فناوری تغییرات شود سپاهیان کنند اجتماعی کتاب این جزوه کتاب شب گروهی فیلم رسانه در رادیو جنگ دهند آتش دشمن</div>
<div class="a tj" style="left:31px;top:90.56px;width:175px;height:7.68px;line-height:7.68px;font-size:5.41px;color:#000;-webkit-text-stroke:0.1px #000;">تفنگ فکر شود تانک ابوسفیان بالای استکباری هواپیما به غیرنظامی یابند خاص تفنگ آتش کنند تلویزیون ماهواره ذهن فیلم دشمن جامعه را</div>
<div class="a tj" style="left:32px;top:103.16px;width:174px;height:7.68px;line-height:7.68px;font-size:5.41px;color:#000;-webkit-text-stroke:0.1px #000;">جنگ آتش های که فعالیت دشمن به خدا عکس توپ تغییرات فکر عکس سپاهیان یابند همراه بالای توپ بلندی یا گروه فیلم</div>
<div class="a" style="left:214px;top:150px;width:14px;height:14px;border-radius:50%;background:#1a6ccc"></div></div>
<div class="a num" style="left:506px;top:635px">12</div>
<svg class="a" style="left:311px;top:638px" width="13" height="10" viewBox="0 0 13 10"><path d="M0 1.8h3M0 4.6h2.6M0 7.4h2.6" stroke="#1e1e1e" stroke-width="1"/><path d="M7.30 0.80 L8.43 3.70 L11.76 3.85 L9.10 5.95 L10.04 9.15 L7.30 7.40 L4.56 9.15 L5.50 5.95 L2.84 3.85 L6.17 3.70z" fill="none" stroke="#1e1e1e" stroke-width="1" stroke-linejoin="round"/></svg>
<div class="a slide" id="s13" style="left:592px;top:446px"><div class="a" style="left:1px;top:0;width:2px;height:180px;background:#c2c5ec"></div><div class="a" style="left:230px;top:0;width:1px;height:180px;background:#bcc0e6"></div><div class="a" style="left:232px;top:0;width:8px;height:180px;background:#b3c5ec"></div><div class="a" style="left:233.5px;top:0;width:1.6px;height:180px;background:#1f6fd2"></div>
<div class="a" style="left:150px;top:7.14px;width:69px;height:8.12px;line-height:8.12px;direction:rtl;white-space:nowrap;overflow:visible;text-align:right;font-size:5.6px;color:#e8101a;font-weight:bold;text-decoration:underline">روش های جنگ روانی</div>
<div class="a tj" style="left:9.6px;top:17.0px;width:183.4px;height:8.99px;line-height:8.99px;font-size:6.32px;color:#000;-webkit-text-stroke:0.15px #000;">روشن تفکر انجام یا کلیهٔ گفته ماهواره خاص بهره ایجاد عوامل ابوسفیان گروهی نظامی جای تلفن این کلیهٔ و قدرت</div>
<div class="a tj" style="left:193px;top:17.0px;width:26px;height:8.99px;line-height:8.99px;font-size:6.32px;color:#2060c0;-webkit-text-stroke:0.15px #2060c0;">رسول مجله اطراف قدرت بالای رادیو مکه فکر</div>
<div class="a tj" style="left:9.6px;top:26.0px;width:209.2px;height:8.99px;line-height:8.99px;font-size:6.32px;color:#000;-webkit-text-stroke:0.15px #000;">تغییر گفته می به که و سپاهیان های تلفن تا نرم انجام و تغییرات کلیهٔ آتش حرکت استکباری جامعه گروهی همراه جامعه فکر</div>
<div class="a tj" style="left:9.6px;top:35.21px;width:209.2px;height:8.99px;line-height:8.99px;font-size:6.32px;color:#000;-webkit-text-stroke:0.15px #000;">مکه قدرت یعنی قدرت قدرت ماهواره آتش دهند ذهن تانک عوامل توپ کنند دشمن گسترده اندیشه ای سپاهیان به جزوه تلویزیون نوع در</div>
<div class="a tj" style="left:143.7px;top:44.8px;width:75.3px;height:8.99px;line-height:8.99px;font-size:6.32px;color:#000;-webkit-text-stroke:0.15px #000;">های بهره دهند یابند تغییرات این جنگ قدرت غیرنظامی یک رسانه فناوری</div>
<div class="a tj" style="left:24.7px;top:54.51px;width:194.3px;height:8.99px;line-height:8.99px;font-size:6.32px;color:#000;-webkit-text-stroke:0.15px #000;">این ای دشمن جای ابوسفیان حرکت سرمایه تلویزیون فراوان فکر این تفنگ قدرت تسلط در یعنی کلیهٔ می این نرم جامعه</div>
<div class="a tj" style="left:122px;top:64.5px;width:97px;height:8.99px;line-height:8.99px;font-size:6.32px;color:#000;-webkit-text-stroke:0.15px #000;">انجام موشک بر شبکه رسانه اطراف نرم جزوه کنند فناوری نظامی سپاهیان تفکر</div>
<div class="a tj" style="left:9.6px;top:73.8px;width:209.2px;height:8.99px;line-height:8.99px;font-size:6.32px;color:#000;-webkit-text-stroke:0.15px #000;">تفکر مردم روز به های تلویزیون گسترده جنگ شب تانک تسلط اجتماعی روشن بالای آن خدا می گروهی غیرنظامی های لازم تغییرات روشن</div>
<div class="a tj" style="left:9.6px;top:83.5px;width:209.2px;height:8.99px;line-height:8.99px;font-size:6.32px;color:#000;-webkit-text-stroke:0.15px #000;">انجام مجله گروهی روز های های که یا فناوری قدرت ابوسفیان که روز عوامل که عوامل بلندی فیلم جامعه سپاهیان نظامی عوامل ای</div>
<div class="a tj" style="left:9.6px;top:93.1px;width:209.2px;height:8.99px;line-height:8.99px;font-size:6.32px;color:#000;-webkit-text-stroke:0.15px #000;">شبکه تغییرات گفته گروه گروه لازم غیرنظامی غیرنظامی ابوسفیان جهت کنند کنند از اندیشه ایجاد جامعه ایجاد قدرت گروه تفنگ هواپیما روزنامه اینترنت</div>
<div class="a tj" style="left:9.6px;top:102.5px;width:209.2px;height:8.99px;line-height:8.99px;font-size:6.32px;color:#000;-webkit-text-stroke:0.15px #000;">این فعالیت مجله شود از دشمن ای کتاب موشک مکه یعنی تفکر از روشن های همراه های تلویزیون فکر ایجاد مجله تفکر ماهواره</div>
<div class="a tj" style="left:9.6px;top:112.5px;width:209.2px;height:8.99px;line-height:8.99px;font-size:6.32px;color:#000;-webkit-text-stroke:0.15px #000;">دشمن سپاهیان خدا تسلط ای جهت شب از می تلویزیون به مردم جامعه از دشمن به مجله را ایجاد را فناوری تا تغییر</div>
<div class="a tj" style="left:9.6px;top:122.0px;width:209.2px;height:8.99px;line-height:8.99px;font-size:6.32px;color:#000;-webkit-text-stroke:0.15px #000;">بلندی مجله ذهن این شب انجام از تسلط روز جنگ تغییر می لازم ابوسفیان در را روز رسول تغییرات کنند موشک عکس ایجاد</div>
<div class="a tj" style="left:9.6px;top:131.5px;width:186.4px;height:8.99px;line-height:8.99px;font-size:6.32px;color:#8030b0;-webkit-text-stroke:0.15px #8030b0;">تلفن اجتماعی جهت اینترنت قدرت های کتاب گروه توپ این اینترنت اسلام یعنی می جزوه کنند جنگ گیرند جامعه سپاهیان اطراف</div>
<div class="a tj" style="left:196px;top:131.5px;width:23px;height:8.99px;line-height:8.99px;font-size:6.32px;color:#20a040;-webkit-text-stroke:0.15px #20a040;text-decoration:underline">فناوری مکه قدرت غیرنظامی مجله بالای موشک</div>
<div class="a tj" style="left:9.6px;top:140.91px;width:209.2px;height:8.99px;line-height:8.99px;font-size:6.32px;color:#8030b0;-webkit-text-stroke:0.15px #8030b0;">فکر خاص بهره استکباری حرکت موشک می نوع رادیو فناوری شود بالای جنگ جامعه رسانه نوع قدرت روز نرم یعنی بر جای توپ</div>
<div class="a tj" style="left:178px;top:149.91px;width:41px;height:8.99px;line-height:8.99px;font-size:6.32px;color:#8030b0;-webkit-text-stroke:0.15px #8030b0;">ماهواره روشن خاص گسترده خاص گفته گسترده موشک مکه</div>
<div class="a" style="left:214px;top:150px;width:14px;height:14px;border-radius:50%;background:#1a6ccc"></div></div>
<div class="a num" style="left:786px;top:635px">13</div>
<svg class="a" style="left:591px;top:638px" width="13" height="10" viewBox="0 0 13 10"><path d="M0 1.8h3M0 4.6h2.6M0 7.4h2.6" stroke="#1e1e1e" stroke-width="1"/><path d="M7.30 0.80 L8.43 3.70 L11.76 3.85 L9.10 5.95 L10.04 9.15 L7.30 7.40 L4.56 9.15 L5.50 5.95 L2.84 3.85 L6.17 3.70z" fill="none" stroke="#1e1e1e" stroke-width="1" stroke-linejoin="round"/></svg>
<div class="a slide" id="s14" style="left:872px;top:446px"><div class="a" style="left:1px;top:0;width:2px;height:180px;background:#c2c5ec"></div><div class="a" style="left:230px;top:0;width:1px;height:180px;background:#bcc0e6"></div><div class="a" style="left:232px;top:0;width:8px;height:180px;background:#b3c5ec"></div><div class="a" style="left:233.5px;top:0;width:1.6px;height:180px;background:#1f6fd2"></div>
<div class="a tj" style="left:21.4px;top:11.56px;width:167.6px;height:7.68px;line-height:7.68px;font-size:5.41px;color:#000;-webkit-text-stroke:0.3px #000;">فکر مجله انجام نرم موشک بر این تغییرات می استکباری تغییرات جامعه شبکه خاص گروهی توپ توپ تلویزیون استفاده جامعه تغییرات</div>
<div class="a tj" style="left:189px;top:11.56px;width:23px;height:7.68px;line-height:7.68px;font-size:5.41px;color:#2060c0;-webkit-text-stroke:0.3px #2060c0;">ابوسفیان تغییرات استفاده گروه شبکه نوع غیرنظامی کلیهٔ</div>
<div class="a tj" style="left:21.4px;top:20.86px;width:190.9px;height:7.68px;line-height:7.68px;font-size:5.41px;color:#000;-webkit-text-stroke:0.3px #000;">تلفن تلویزیون فناوری یابند یعنی کنند تفنگ نوع فعالیت گروهی شود مکه تلفن به گفته تلویزیون روز شب بلندی قدرت ماهواره جنگ نظامی گسترده</div>
<div class="a tj" style="left:21.4px;top:29.36px;width:190.9px;height:7.68px;line-height:7.68px;font-size:5.41px;color:#000;-webkit-text-stroke:0.3px #000;">های قدرت روز بالای جنگ سرمایه تا قدرت یک گیرند تلویزیون هواپیما این کنند روز ایجاد ماهواره گفته تلفن ای ای کنند انجام شود</div>
<div class="a tj" style="left:21.4px;top:37.96px;width:190.9px;height:7.68px;line-height:7.68px;font-size:5.41px;color:#000;-webkit-text-stroke:0.3px #000;">اینترنت اندیشه گیرند فعالیت روشن همراه فکر سرمایه استکباری تا های موشک کلیهٔ شبکه را تغییرات غیرنظامی شود اسلام تسلط انجام ای جامعه فکر</div>
<div class="a tj" style="left:102px;top:47.16px;width:110px;height:7.68px;line-height:7.68px;font-size:5.41px;color:#000;-webkit-text-stroke:0.3px #000;">مجله ایجاد شب گیرند اسلام گروه ای تفکر ذهن فعالیت ابوسفیان کتاب فکر روزنامه همراه گیرند</div>
<div class="a tj" style="left:21.4px;top:55.76px;width:190.9px;height:7.68px;line-height:7.68px;font-size:5.41px;color:#000;-webkit-text-stroke:0.3px #000;">گروه فراوان تا اجتماعی ذهن یک آتش عکس ابوسفیان و شود استفاده جزوه تلفن و کلیهٔ آن ماهواره ماهواره کنند روز سرمایه عکس بالای</div>
<div class="a tj" style="left:21.4px;top:64.76px;width:190.9px;height:7.68px;line-height:7.68px;font-size:5.41px;color:#000;-webkit-text-stroke:0.3px #000;">این تغییرات یابند توپ تلفن مردم یابند اجتماعی نوع تسلط می جامعه عوامل ابوسفیان بر تفکر قدرت رسول گسترده یابند گروهی عکس نظامی ابوسفیان</div>
<div class="a tj" style="left:21.4px;top:73.36px;width:190.9px;height:7.68px;line-height:7.68px;font-size:5.41px;color:#000;-webkit-text-stroke:0.3px #000;">همراه نوع تفنگ حرکت های جامعه تفکر عکس جنگ جای ماهواره جزوه فراوان شود اینترنت سرمایه تا اندیشه به گسترده استفاده عکس گفته های</div>
<div class="a tj" style="left:21.4px;top:81.96px;width:190.9px;height:7.68px;line-height:7.68px;font-size:5.41px;color:#000;-webkit-text-stroke:0.3px #000;">توپ موشک اندیشه را اینترنت روشن ابوسفیان در استکباری فیلم خاص توپ شبکه و در خدا موشک یا مردم مجله ابوسفیان بالای کلیهٔ استکباری</div>
<div class="a tj" style="left:21.4px;top:90.56px;width:190.9px;height:7.68px;line-height:7.68px;font-size:5.41px;color:#000;-webkit-text-stroke:0.3px #000;">کلیهٔ گروه آن های تفنگ شود مکه ایجاد بالای گروهی جنگ تا بهره مجله خاص گروه تلفن سپاهیان می آتش فناوری مکه جهت نظامی</div>
<div class="a tj" style="left:166px;top:99.56px;width:46px;height:7.68px;line-height:7.68px;font-size:5.41px;color:#000;-webkit-text-stroke:0.3px #000;">حرکت ابوسفیان توپ جامعه تغییر فناوری تسلط مردم در رادیو</div>
<div class="a" style="left:19.3px;top:120px;width:195.2px;height:36.6px;border:1px solid #111;border-radius:6px"></div>
<div class="a" style="left:150px;top:118.17px;width:61px;height:12.47px;line-height:12.47px;direction:rtl;white-space:nowrap;overflow:visible;text-align:right;font-size:8.6px;color:#1a9ad8;font-weight:bold;text-decoration:underline;-webkit-text-stroke:0.3px #1a9ad8">فعالیت (۳)</div>
<div class="a" style="left:30px;top:131.21px;width:181px;height:12.18px;line-height:12.18px;direction:rtl;white-space:nowrap;overflow:visible;text-align:right;font-size:8.4px;color:#1f2f50;font-weight:normal;">راه های مقابله و جلوگیری از شایعه پراکنی کدامند؟</div>
<div class="a" style="left:214px;top:150px;width:14px;height:14px;border-radius:50%;background:#1a6ccc"></div></div>
<div class="a num" style="left:1066px;top:635px">14</div>
<svg class="a" style="left:871px;top:638px" width="13" height="10" viewBox="0 0 13 10"><path d="M0 1.8h3M0 4.6h2.6M0 7.4h2.6" stroke="#1e1e1e" stroke-width="1"/><path d="M7.30 0.80 L8.43 3.70 L11.76 3.85 L9.10 5.95 L10.04 9.15 L7.30 7.40 L4.56 9.15 L5.50 5.95 L2.84 3.85 L6.17 3.70z" fill="none" stroke="#1e1e1e" stroke-width="1" stroke-linejoin="round"/></svg>
<div class="a slide" id="s15" style="left:1152px;top:446px"><div class="a" style="left:1px;top:0;width:2px;height:180px;background:#c2c5ec"></div><div class="a" style="left:230px;top:0;width:1px;height:180px;background:#bcc0e6"></div><div class="a" style="left:232px;top:0;width:8px;height:180px;background:#b3c5ec"></div><div class="a" style="left:233.5px;top:0;width:1.6px;height:180px;background:#1f6fd2"></div>
<div class="a tj" style="left:14px;top:11.56px;width:151px;height:7.68px;line-height:7.68px;font-size:5.41px;color:#000;-webkit-text-stroke:0.3px #000;">نظامی لازم رسول یک این ماهواره جنگ یا تفکر تغییر رسول و اندیشه نوع گروهی روز را گفته تغییر می</div>
<div class="a tj" style="left:165px;top:11.56px;width:47px;height:7.68px;line-height:7.68px;font-size:5.41px;color:#2060c0;-webkit-text-stroke:0.3px #2060c0;">اسلام اطراف به انجام موشک نوع روز خدا تغییر نظامی</div>
<div class="a tj" style="left:14px;top:20.86px;width:204.8px;height:7.68px;line-height:7.68px;font-size:5.41px;color:#000;-webkit-text-stroke:0.3px #000;">تفنگ نوع کتاب اینترنت ماهواره سرمایه آن تا ابوسفیان فیلم ابوسفیان قدرت های فعالیت آتش که فراوان رسانه ایجاد ذهن اندیشه را گروهی غیرنظامی تسلط</div>
<div class="a tj" style="left:14px;top:29.36px;width:204.8px;height:7.68px;line-height:7.68px;font-size:5.41px;color:#000;-webkit-text-stroke:0.3px #000;">ای ماهواره کنند جامعه روزنامه ایجاد استکباری فیلم روزنامه تفکر مردم حرکت گروه از تلویزیون روزنامه اینترنت شود حرکت دشمن تفنگ تفنگ عکس تغییر تلفن</div>
<div class="a tj" style="left:14px;top:37.96px;width:204.8px;height:7.68px;line-height:7.68px;font-size:5.41px;color:#000;-webkit-text-stroke:0.3px #000;">رسانه یعنی جای یعنی مجله گروه های تغییر یک رسانه بر هواپیما ای توپ جامعه بلندی ابوسفیان جهت که تلفن گسترده حرکت تلفن اسلام شب</div>
<div class="a tj" style="left:14px;top:46.56px;width:204.8px;height:7.68px;line-height:7.68px;font-size:5.41px;color:#000;-webkit-text-stroke:0.3px #000;">دشمن تلفن توپ تغییرات به که بر تفکر مکه استکباری و یعنی اسلام آتش جزوه آتش گروهی کنند سرمایه روز فناوری اطراف فراوان در تسلط</div>
<div class="a tj" style="left:14px;top:55.16px;width:204.8px;height:7.68px;line-height:7.68px;font-size:5.41px;color:#000;-webkit-text-stroke:0.3px #000;">که نظامی ابوسفیان گیرند کنند دهند ایجاد استکباری تا غیرنظامی ماهواره ایجاد های کلیهٔ کتاب یا تانک رسول ماهواره این توپ تا ماهواره غیرنظامی هواپیما</div>
<div class="a tj" style="left:14px;top:64.36px;width:204.8px;height:7.68px;line-height:7.68px;font-size:5.41px;color:#000;-webkit-text-stroke:0.3px #000;">فعالیت تلویزیون خدا قدرت بالای دشمن تغییر خدا فکر که یک ماهواره شب روز تلفن بهره عوامل کلیهٔ فراوان شبکه اطراف بلندی استکباری خاص تفکر</div>
<div class="a tj" style="left:14px;top:72.96px;width:204.8px;height:7.68px;line-height:7.68px;font-size:5.41px;color:#000;-webkit-text-stroke:0.3px #000;">همراه حرکت تغییرات در قدرت تفکر تسلط خاص کنند کلیهٔ اینترنت به کلیهٔ فراوان نظامی یک جهت تسلط یک جامعه تفکر فعالیت استفاده گسترده خدا</div>
<div class="a tj" style="left:14px;top:81.56px;width:204.8px;height:7.68px;line-height:7.68px;font-size:5.41px;color:#000;-webkit-text-stroke:0.3px #000;">گفته بهره تا دشمن فیلم ای فناوری گروهی در تفنگ کنند رسول ماهواره تغییر گیرند نظامی شود دشمن ای غیرنظامی کلیهٔ و کلیهٔ های فراوان</div>
<div class="a tj" style="left:14px;top:90.16px;width:204.8px;height:7.68px;line-height:7.68px;font-size:5.41px;color:#000;-webkit-text-stroke:0.3px #000;">روشن در شبکه تانک تانک اطراف می را مکه و هواپیما کتاب شب رادیو تفکر سرمایه می گروهی لازم فیلم قدرت انجام کنند ماهواره اندیشه</div>
<div class="a tj" style="left:14px;top:99.16px;width:204.8px;height:7.68px;line-height:7.68px;font-size:5.41px;color:#000;-webkit-text-stroke:0.3px #000;">شبکه بهره جای خدا رسانه تفنگ استفاده و روشن های ماهواره اطراف رسانه مکه گسترده کلیهٔ خاص اطراف تانک بالای اینترنت گفته جزوه شبکه فراوان</div>
<div class="a tj" style="left:14px;top:108.16px;width:204.8px;height:7.68px;line-height:7.68px;font-size:5.41px;color:#000;-webkit-text-stroke:0.3px #000;">جزوه مکه جنگ بهره از فناوری به موشک این جای اینترنت انجام بلندی که از گروهی شب گروهی استفاده حرکت فراوان تغییر مجله سپاهیان در</div>
<div class="a tj" style="left:175px;top:117.16px;width:44px;height:7.68px;line-height:7.68px;font-size:5.41px;color:#000;-webkit-text-stroke:0.3px #000;">اسلام حرکت را جزوه جامعه گسترده جنگ تانک مکه و</div>
<div class="a" style="left:214px;top:150px;width:14px;height:14px;border-radius:50%;background:#1a6ccc"></div></div>
<div class="a num" style="left:1346px;top:635px">15</div>
<svg class="a" style="left:1151px;top:638px" width="13" height="10" viewBox="0 0 13 10"><path d="M0 1.8h3M0 4.6h2.6M0 7.4h2.6" stroke="#1e1e1e" stroke-width="1"/><path d="M7.30 0.80 L8.43 3.70 L11.76 3.85 L9.10 5.95 L10.04 9.15 L7.30 7.40 L4.56 9.15 L5.50 5.95 L2.84 3.85 L6.17 3.70z" fill="none" stroke="#1e1e1e" stroke-width="1" stroke-linejoin="round"/></svg>
<div class="a slide" id="s16" style="left:32px;top:663px"><div class="a" style="left:1px;top:0;width:2px;height:180px;background:#c2c5ec"></div><div class="a" style="left:230px;top:0;width:1px;height:180px;background:#bcc0e6"></div><div class="a" style="left:232px;top:0;width:8px;height:180px;background:#b3c5ec"></div><div class="a" style="left:233.5px;top:0;width:1.6px;height:180px;background:#1f6fd2"></div></div>
<div class="a slide" id="s17" style="left:312px;top:663px"><div class="a" style="left:1px;top:0;width:2px;height:180px;background:#c2c5ec"></div><div class="a" style="left:230px;top:0;width:1px;height:180px;background:#bcc0e6"></div><div class="a" style="left:232px;top:0;width:8px;height:180px;background:#b3c5ec"></div><div class="a" style="left:233.5px;top:0;width:1.6px;height:180px;background:#1f6fd2"></div><div class="a tj" style="left:17px;top:11.16px;width:188px;height:7.68px;line-height:7.68px;font-size:5.41px;color:#000;-webkit-text-stroke:0.3px #000;">سرمایه اجتماعی نوع ماهواره گروه شود بلندی کلیهٔ شبکه گیرند اسلام جهت سپاهیان عکس عوامل جنگ اجتماعی بالای فکر این فکر موشک اندیشه</div><div class="a tj" style="left:205px;top:11.16px;width:18px;height:7.68px;line-height:7.68px;font-size:5.41px;color:#2060c0;-webkit-text-stroke:0.3px #2060c0;">یعنی بلندی جامعه بر تسلط بر جهت</div></div>
<div class="a slide" id="s18" style="left:592px;top:663px"><div class="a" style="left:1px;top:0;width:2px;height:180px;background:#c2c5ec"></div><div class="a" style="left:230px;top:0;width:1px;height:180px;background:#bcc0e6"></div><div class="a" style="left:232px;top:0;width:8px;height:180px;background:#b3c5ec"></div><div class="a" style="left:233.5px;top:0;width:1.6px;height:180px;background:#1f6fd2"></div><div class="a tj" style="left:16px;top:11.16px;width:202px;height:7.68px;line-height:7.68px;font-size:5.41px;color:#000;-webkit-text-stroke:0.3px #000;">تا روز تفنگ فیلم شب خدا عکس تلفن فکر خاص گفته که تغییر کتاب تغییرات کتاب کنند نوع در خاص هواپیما اطراف های مجله استفاده</div></div>
<div class="a slide" id="s19" style="left:872px;top:663px"><div class="a" style="left:1px;top:0;width:2px;height:180px;background:#c2c5ec"></div><div class="a" style="left:230px;top:0;width:1px;height:180px;background:#bcc0e6"></div><div class="a" style="left:232px;top:0;width:8px;height:180px;background:#b3c5ec"></div><div class="a" style="left:233.5px;top:0;width:1.6px;height:180px;background:#1f6fd2"></div><div class="a" style="left:25.5px;top:10px;width:196.5px;height:40px;border:1px solid #111;border-radius:6px"></div><div class="a tj" style="left:190px;top:10.65px;width:25px;height:8.7px;line-height:8.7px;font-size:6.12px;color:#1a9ad8;-webkit-text-stroke:0.3px #1a9ad8;">فکر مکه فعالیت ایجاد غیرنظامی گروه خدا را</div></div>
<div class="a slide" id="s20" style="left:1152px;top:663px"><div class="a" style="left:1px;top:0;width:2px;height:180px;background:#c2c5ec"></div><div class="a" style="left:230px;top:0;width:1px;height:180px;background:#bcc0e6"></div><div class="a" style="left:232px;top:0;width:8px;height:180px;background:#b3c5ec"></div><div class="a" style="left:233.5px;top:0;width:1.6px;height:180px;background:#1f6fd2"></div><svg class="a" style="left:0;top:0" width="240" height="180"><rect x="28" y="10" width="89" height="40" fill="#f4f2f0" stroke="#e0dcd8"/><rect x="30.5" y="11.5" width="85" height="38" fill="#a89888"/><rect x="120" y="10" width="85" height="40" fill="#f0f2f6" stroke="#e0e4ea"/><rect x="122" y="11" width="81" height="38" fill="#2a3c88"/><path d="M150 18 l50 -5" stroke="#a0b8e8" stroke-width="2" opacity="0.7"/></svg></div>
<div class="a" style="left:570.8px;top:222px;width:1.5px;height:194px;background:#25282d"></div>
</div>
<!-- scrollbar -->
<div class="a" style="left:1424px;top:138px;width:16px;height:680px;background:#d9dce0;border-left:1px solid #c3c7cc"></div>
<div class="a" style="left:1424px;top:141px;width:16px;height:17px;background:linear-gradient(90deg,#e9ebee,#f4f5f7)"></div>
<svg class="a" style="left:1428px;top:146px" width="9" height="6" viewBox="0 0 9 6"><path d="M0 5.5L4.5 0.5 9 5.5z" fill="#3e4148"/></svg>
<div class="a" style="left:1425px;top:158px;width:14px;height:332px;border:1px solid #9ea3aa;border-radius:2px;background:linear-gradient(90deg,#e6e9ee,#f6f7f9 45%,#e3e6eb)"></div>
<svg class="a" style="left:1428px;top:320px" width="8" height="6" viewBox="0 0 8 6"><path d="M0 0.5h8M0 2.5h8M0 4.5h8" stroke="#7f858d" stroke-width="1"/></svg>
<svg class="a" style="left:1428px;top:806px" width="9" height="6" viewBox="0 0 9 6"><path d="M0 0.5L4.5 5.5 9 0.5z" fill="#3e4148"/></svg>
<!-- status bar -->
<div id="status" class="a"></div>
<div class="a" style="left:77px;top:819px;width:1px;height:20px;background:#aeb3b9"></div>
<div class="a" style="left:128px;top:819px;width:1px;height:20px;background:#aeb3b9"></div>
<div class="a" style="left:214px;top:819px;width:1px;height:20px;background:#aeb3b9"></div>
<div class="a" style="left:1155px;top:819px;width:1px;height:20px;background:#aeb3b9"></div>
<div class="a ui" style="left:8px;top:822px;color:#3a3f47;letter-spacing:-0.3px">Slide Sorter</div>
<div class="a ui" style="left:87px;top:822px;color:#3a3f47;letter-spacing:-0.2px">"Oriel"</div>
<div class="a ui" style="left:138px;top:822px;color:#3a3f47;letter-spacing:-0.4px">English (U.S.)</div>
<svg class="a" style="left:1163px;top:823px" width="14" height="11" viewBox="0 0 14 11"><rect x="0.5" y="0.5" width="13" height="10" fill="#fff" stroke="#3b3f46"/><path d="M5.5 0.5v10" stroke="#3b3f46"/><rect x="7" y="2" width="5" height="3" fill="#3b3f46"/><rect x="7" y="6" width="5" height="3" fill="#3b3f46"/></svg>
<div class="a" style="left:1180px;top:820px;width:18px;height:18px;border:1px solid #e3b43c;border-radius:2px;background:linear-gradient(#fff1b4,#fbd762)"></div>
<svg class="a" style="left:1183px;top:823px" width="12" height="12" viewBox="0 0 12 12"><rect x="0.5" y="0.5" width="4.5" height="4" fill="none" stroke="#3b3f46"/><rect x="7" y="0.5" width="4.5" height="4" fill="none" stroke="#3b3f46"/><rect x="0.5" y="7" width="4.5" height="4" fill="none" stroke="#3b3f46"/><rect x="7" y="7" width="4.5" height="4" fill="none" stroke="#3b3f46"/></svg>
<svg class="a" style="left:1201px;top:823px" width="12" height="11" viewBox="0 0 12 11"><path d="M0.5 1.5c2-1 4-1 5.5 0v9c-1.5-1-3.5-1-5.5 0z M11.5 1.5c-2-1-4-1-5.5 0v9c1.5-1 3.5-1 5.5 0z" fill="#fff" stroke="#3b3f46"/><path d="M2 4h3M2 6h3M7 4h3M7 6h3" stroke="#888"/></svg>
<svg class="a" style="left:1219px;top:822px" width="13" height="13" viewBox="0 0 13 13"><path d="M0.5 1.5h12" stroke="#3b3f46" stroke-width="1.2"/><rect x="1.5" y="2" width="10" height="6" fill="#fff" stroke="#3b3f46"/><path d="M6.5 8v3M4 12l2.5-1.5 2.5 1.5" stroke="#3b3f46" fill="none"/></svg>
<div class="a ui" style="left:1243px;top:822px;color:#3a3f47;letter-spacing:-0.2px;font-size:12.5px">100%</div>
<svg class="a" style="left:1278px;top:820px" width="160" height="18" viewBox="0 0 160 18">
<path d="M17 9h100" stroke="#9aa0a7" stroke-width="1"/>
<path d="M17 10h100" stroke="#f4f5f6" stroke-width="1"/>
<circle cx="9" cy="9" r="7.5" fill="#f7f8f9" stroke="#7d838b"/>
<path d="M5 9h8" stroke="#3b3f46" stroke-width="2"/>
<circle cx="125" cy="9" r="7.5" fill="#f7f8f9" stroke="#7d838b"/>
<path d="M121 9h8M125 5v8" stroke="#3b3f46" stroke-width="2"/>
<path d="M62.5 3.5h9v7l-4.5 4.5-4.5-4.5z" fill="#f4f5f7" stroke="#7d838b"/>
<rect x="141.5" y="1.5" width="16" height="15" fill="#eef0f2" stroke="#7d838b"/>
<path d="M149.5 3v4M147.5 5l2-2 2 2M149.5 15v-4M147.5 13l2 2 2-2M143 9h4M145 7l-2 2 2 2M156 9h-4M154 7l2 2-2 2" stroke="#3b3f46" stroke-width="0.9" fill="none"/>
</svg>

</body></html>
